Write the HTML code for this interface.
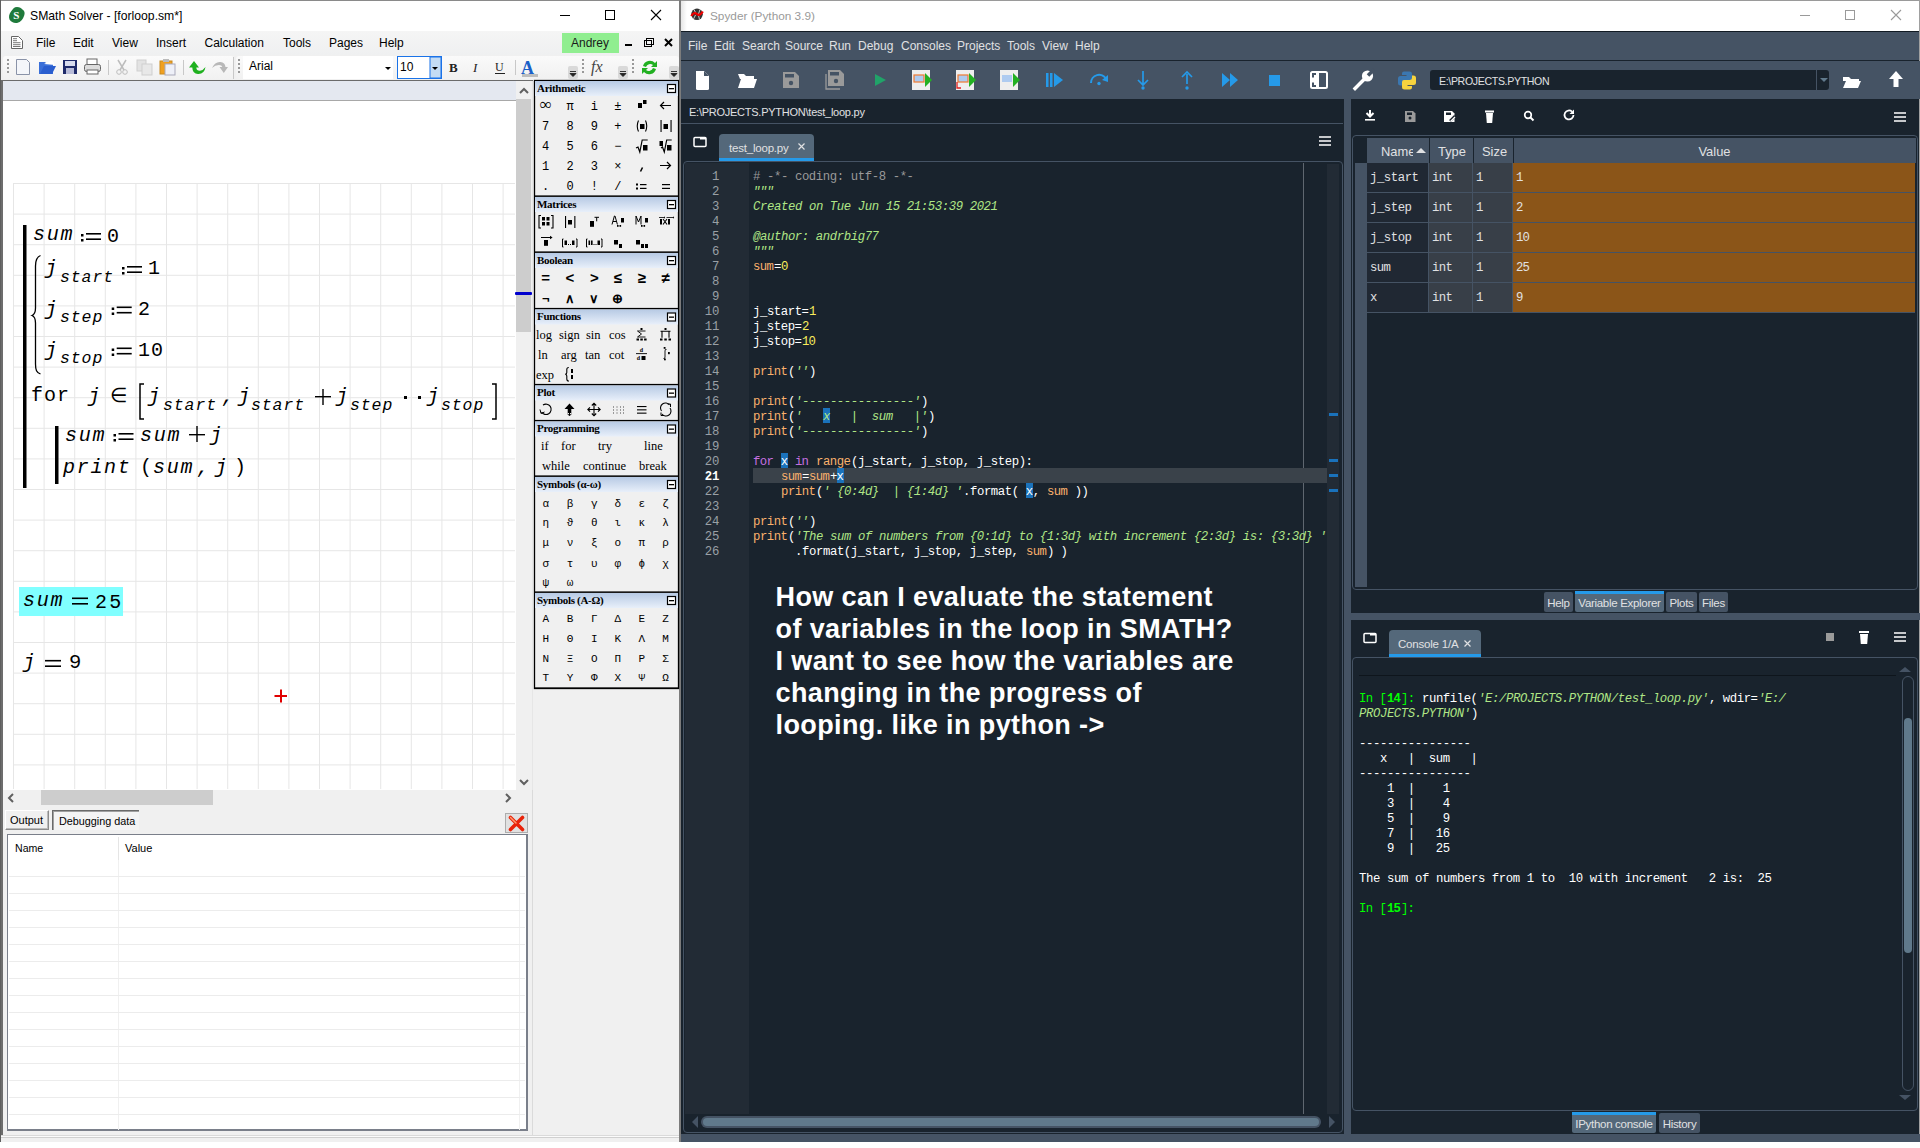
<!DOCTYPE html>
<html><head><meta charset="utf-8">
<style>
*{margin:0;padding:0;box-sizing:border-box}
html,body{width:1920px;height:1148px;overflow:hidden;background:#fff;font-family:"Liberation Sans",sans-serif}
.a{position:absolute}
svg text{white-space:pre}
</style></head><body>
<!-- ================= SMATH ================= -->
<div class="a" id="smath" style="left:0;top:0;width:681px;height:1142px;background:#f0f0f0;overflow:hidden">
  <div class="a" style="left:1px;top:1px;width:678px;height:30px;background:#fff"></div>
  <div class="a" style="left:1px;top:31px;width:678px;height:24px;background:linear-gradient(#f5f5f5,#eff0f1)"></div>
  <div class="a" style="left:3px;top:56px;width:231px;height:23px;background:linear-gradient(#fbfbfb,#f1f1f1);border-radius:3px"></div>
  <div class="a" style="left:236px;top:56px;width:443px;height:23px;background:linear-gradient(#fafafa,#f1f1f1);border-radius:3px"></div>
  <!-- font toolbar lighter segment -->
  <div class="a" style="left:243px;top:56px;width:150px;height:23px;background:#fff"></div>
  <!-- canvas frame -->
  <div class="a" style="left:1px;top:80px;width:532px;height:1px;background:#6b6b6b"></div>
  <div class="a" style="left:1px;top:80px;width:2px;height:1055px;background:#6d6d6d"></div>
  <div class="a" style="left:3px;top:81px;width:513px;height:19px;background:#e4e8f0"></div>
  <div class="a" style="left:3px;top:100px;width:513px;height:1px;background:#a8a8a8"></div>
  <div class="a" style="left:3px;top:101px;width:513px;height:689px;background:#fff"></div>
  <!-- vertical scrollbar -->
  <div class="a" style="left:516px;top:81px;width:17px;height:709px;background:#f0f0f0"></div>
  <div class="a" style="left:516px;top:99px;width:15px;height:233px;background:#cdcdcd"></div>
  <div class="a" style="left:515px;top:292px;width:17px;height:3px;background:#0000cd;border-radius:1px"></div>
  <!-- horizontal scrollbar -->
  <div class="a" style="left:3px;top:790px;width:530px;height:15px;background:#f0f0f0"></div>
  <div class="a" style="left:41px;top:790px;width:172px;height:15px;background:#cdcdcd"></div>
  <!-- palette area -->
  <div class="a" style="left:533px;top:81px;width:146px;height:1054px;background:#f0f0f0"></div>
  <div class="a" style="left:532px;top:688px;width:1px;height:447px;background:#dadada"></div><div class="a" style="left:532px;top:81px;width:1px;height:709px;background:#e6e6e6"></div>
<!-- bottom area: tabs + table -->
  <div class="a" style="left:5px;top:810px;width:44px;height:20px;background:#f0f0f0;border:1px solid #8c8c8c;border-top-color:#fff;border-left-color:#fff;box-shadow:inset -1px -1px 0 #bbb"></div>
  <div class="a" style="left:52px;top:810px;width:87px;height:20px;background:#f4f4f4;border:1px solid #6a6a6a;border-width:1px 0 0 1px;box-shadow:inset 1px 1px 0 #a0a0a0"></div>
  <div class="a" style="left:505px;top:813px;width:23px;height:20px;background:#e1e1e1;border:1px solid #adadad"></div>
  <div class="a" style="left:7px;top:834px;width:521px;height:297px;background:#fff;border:1px solid #7a7f8a;border-width:1px 2px 2px 1px"></div>
  <div class="a" style="left:1px;top:1135px;width:678px;height:1px;background:#dadada"></div>
  <div class="a" style="left:1px;top:1136px;width:678px;height:1px;background:#fbfbfb"></div>
  <div class="a" style="left:1px;top:1137px;width:678px;height:1px;background:#d0d0d0"></div>
  <!-- window border -->
  <div class="a" style="left:0;top:0;width:681px;height:1px;background:#8a8a8a"></div>
  <div class="a" style="left:0;top:0;width:1px;height:1142px;background:#5f5f5f"></div>
  <div class="a" style="left:679px;top:0;width:2px;height:1142px;background:#7c7c7c"></div>
</div>

<svg class="a" style="left:0;top:0" width="681" height="1142">
<!-- title icon -->
<path d="M17 7 C20 7 21 8 22.5 9.5 C25 11 25 14 24 16 C23 19 21 22 17 23 C14 23.5 11 22 9.5 19.5 C8.5 17 9 14 11 11.5 C13 9 14 7 17 7Z" fill="#1f7a3c"/>
<text x="13.2" y="19" font-family="Liberation Serif" font-weight="bold" font-size="11" fill="#fff">S</text>
<text x="30" y="19.8" font-family="Liberation Sans" font-size="12.2" fill="#000">SMath Solver - [forloop.sm*]</text>
<!-- window controls -->
<rect x="560" y="15" width="10" height="1" fill="#000"/>
<rect x="605.5" y="10.5" width="9" height="9" fill="none" stroke="#000" stroke-width="1"/>
<path d="M651 10 L661 20 M661 10 L651 20" stroke="#000" stroke-width="1.1"/>
<!-- menu -->
<g font-family="Liberation Sans" font-size="12" fill="#000">
<text x="36" y="46.6">File</text><text x="73" y="46.6">Edit</text><text x="112" y="46.6">View</text>
<text x="156" y="46.6">Insert</text><text x="204.5" y="46.6">Calculation</text><text x="283" y="46.6">Tools</text>
<text x="329" y="46.6">Pages</text><text x="379" y="46.6">Help</text>
</g>
<!-- doc icon in menu -->
<path d="M11.5 36.5h7l4 4v8h-11z" fill="#fff" stroke="#666"/><path d="M13 38.7h4M13 40.7h4M13 42.7h7.5M13 44.7h7.5M13 46.5h7.5" stroke="#555" stroke-width="0.8"/>
<!-- Andrey -->
<rect x="562" y="33" width="57" height="20" fill="#90ee90"/>
<text x="571" y="46.8" font-family="Liberation Sans" font-size="12" fill="#1a1a1a">Andrey</text>
<rect x="625" y="44" width="7" height="2" fill="#000"/>
<rect x="644.5" y="40.5" width="7" height="6" fill="none" stroke="#000"/><rect x="646.5" y="38.5" width="7" height="6" fill="none" stroke="#000"/>
<path d="M665 39 L672 46 M672 39 L665 46" stroke="#000" stroke-width="2"/>
<!-- toolbar grip -->
<g fill="#999"><rect x="7" y="59" width="2" height="2"/><rect x="7" y="63" width="2" height="2"/><rect x="7" y="67" width="2" height="2"/><rect x="7" y="71" width="2" height="2"/>
<rect x="238" y="59" width="2" height="2"/><rect x="238" y="63" width="2" height="2"/><rect x="238" y="67" width="2" height="2"/><rect x="238" y="71" width="2" height="2"/>
<rect x="582" y="59" width="2" height="2"/><rect x="582" y="63" width="2" height="2"/><rect x="582" y="67" width="2" height="2"/><rect x="582" y="71" width="2" height="2"/>
<rect x="632" y="59" width="2" height="2"/><rect x="632" y="63" width="2" height="2"/><rect x="632" y="67" width="2" height="2"/><rect x="632" y="71" width="2" height="2"/></g>
<!-- new -->
<path d="M16.5 59.5h10l3 3v12h-13z" fill="#f4f6fa" stroke="#8a93a8"/>
<!-- open -->
<path d="M39 62h6l2 2h6v10h-14z" fill="#3a6fd8"/><path d="M40 74l4-8h12l-4 8z" fill="#2a5ecf"/><path d="M44 64l8-4 3 5z" fill="#fff"/>
<!-- save -->
<rect x="63" y="60" width="14" height="14" fill="#1e2a6a"/><rect x="65" y="61" width="10" height="5" fill="#d8dcee"/><rect x="66" y="68" width="8" height="6" fill="#b8bcd8"/>
<!-- print -->
<rect x="87" y="59" width="10" height="6" fill="#fff" stroke="#666"/><rect x="84.5" y="64.5" width="16" height="7" rx="2" fill="#ddd" stroke="#666"/><rect x="87" y="70" width="11" height="4" fill="#fff" stroke="#666"/>
<rect x="108" y="60" width="1" height="15" fill="#c8c8c8"/>
<!-- cut copy paste (disabled) -->
<path d="M118 60l6 10M126 60l-6 10" stroke="#bdbdbd" stroke-width="1.5"/><circle cx="119" cy="72" r="2.3" fill="none" stroke="#bdbdbd"/><circle cx="125" cy="72" r="2.3" fill="none" stroke="#bdbdbd"/>
<rect x="137" y="60" width="9" height="11" fill="#e3e3e3" stroke="#cfcfcf"/><rect x="142" y="64" width="10" height="11" fill="#e8e8e8" stroke="#cfcfcf"/>
<rect x="160" y="61" width="12" height="13" fill="#f0a020" stroke="#c88a20"/><rect x="165" y="64" width="10" height="11" fill="#eef0f8" stroke="#aab"/><rect x="163" y="59" width="6" height="3" fill="#bbb"/>
<rect x="183" y="60" width="1" height="15" fill="#c8c8c8"/>
<!-- undo redo -->
<path d="M189 67.5 L194 61 L199 67.5 L196.3 67.5 Q196.5 71 200 70.8 Q203 70.5 205.5 67 Q204.5 73.8 198.5 74 Q192.5 74.3 192.3 67.5 Z" fill="#1fb01f"/>
<path d="M212 68 Q215 61.5 220.5 62 Q225 62.5 225.5 67 L228 67 L223.8 73 L219.5 67 L222.3 67 Q221.8 65 219 65 Q215 65 212 68 Z" fill="#b8b8b8"/>
<rect x="233" y="57" width="1" height="22" fill="#c8c8c8"/>
<!-- font combo -->
<text x="249" y="70" font-family="Liberation Sans" font-size="12" fill="#000">Arial</text>
<path d="M385 67h6l-3 3z" fill="#000"/>
<rect x="397.5" y="56.5" width="44" height="22" fill="#fff" stroke="#1a73e8"/>
<rect x="430" y="57" width="11" height="21" fill="#c4dcf4" stroke="#1a73e8"/>
<path d="M432 67h6l-3 3z" fill="#000"/>
<text x="400" y="71" font-family="Liberation Sans" font-size="12" fill="#000">10</text>
<text x="449" y="72" font-family="Liberation Serif" font-weight="bold" font-size="13" fill="#222">B</text>
<text x="473" y="72" font-family="Liberation Serif" font-style="italic" font-size="13" fill="#222">I</text>
<text x="495" y="71" font-family="Liberation Serif" font-size="12" fill="#222">U</text><rect x="495" y="73" width="10" height="1" fill="#222"/>
<rect x="515" y="60" width="1" height="15" fill="#c8c8c8"/>
<text x="521" y="74" font-family="Liberation Serif" font-weight="bold" font-size="18" fill="#1a5fc8">A</text>
<rect x="522" y="74" width="16" height="3" fill="#bdbdbd"/>
<!-- chevrons -->
<rect x="568" y="66" width="10" height="13" fill="#d9d9d9" rx="2"/><path d="M570 71.5h6M570 73.5h6l-3 3z" stroke="#222" fill="#222" stroke-width="0.9"/>
<rect x="618" y="66" width="10" height="13" fill="#d9d9d9" rx="2"/><path d="M620 71.5h6M620 73.5h6l-3 3z" stroke="#222" fill="#222" stroke-width="0.9"/>
<rect x="669" y="66" width="10" height="13" fill="#d9d9d9" rx="2"/><path d="M671 71.5h6M671 73.5h6l-3 3z" stroke="#222" fill="#222" stroke-width="0.9"/>
<text x="591" y="72" font-family="Liberation Serif" font-style="italic" font-size="16" fill="#444">fx</text>
<!-- refresh icon -->
<path d="M643 66 a7 7 0 0 1 12 -3 l2 -2 v6 h-6 l2 -2 a4.5 4.5 0 0 0 -7 2z" fill="#21b021"/>
<path d="M656 69 a7 7 0 0 1 -12 3 l-2 2 v-6 h6 l-2 2 a4.5 4.5 0 0 0 7 -2z" fill="#21b021"/>
<!-- grid --><rect x="13.00" y="183" width="1" height="606" fill="#e6e6e6"/><rect x="43.60" y="183" width="1" height="606" fill="#e6e6e6"/><rect x="74.20" y="183" width="1" height="606" fill="#e6e6e6"/><rect x="104.80" y="183" width="1" height="606" fill="#e6e6e6"/><rect x="135.40" y="183" width="1" height="606" fill="#e6e6e6"/><rect x="166.00" y="183" width="1" height="606" fill="#e6e6e6"/><rect x="196.60" y="183" width="1" height="606" fill="#e6e6e6"/><rect x="227.20" y="183" width="1" height="606" fill="#e6e6e6"/><rect x="257.80" y="183" width="1" height="606" fill="#e6e6e6"/><rect x="288.40" y="183" width="1" height="606" fill="#e6e6e6"/><rect x="319.00" y="183" width="1" height="606" fill="#e6e6e6"/><rect x="349.60" y="183" width="1" height="606" fill="#e6e6e6"/><rect x="380.20" y="183" width="1" height="606" fill="#e6e6e6"/><rect x="410.80" y="183" width="1" height="606" fill="#e6e6e6"/><rect x="441.40" y="183" width="1" height="606" fill="#e6e6e6"/><rect x="472.00" y="183" width="1" height="606" fill="#e6e6e6"/><rect x="502.60" y="183" width="1" height="606" fill="#e6e6e6"/><rect x="13" y="183.00" width="502" height="1" fill="#e6e6e6"/><rect x="13" y="213.60" width="502" height="1" fill="#e6e6e6"/><rect x="13" y="244.20" width="502" height="1" fill="#e6e6e6"/><rect x="13" y="274.80" width="502" height="1" fill="#e6e6e6"/><rect x="13" y="305.40" width="502" height="1" fill="#e6e6e6"/><rect x="13" y="336.00" width="502" height="1" fill="#e6e6e6"/><rect x="13" y="366.60" width="502" height="1" fill="#e6e6e6"/><rect x="13" y="397.20" width="502" height="1" fill="#e6e6e6"/><rect x="13" y="427.80" width="502" height="1" fill="#e6e6e6"/><rect x="13" y="458.40" width="502" height="1" fill="#e6e6e6"/><rect x="13" y="489.00" width="502" height="1" fill="#e6e6e6"/><rect x="13" y="519.60" width="502" height="1" fill="#e6e6e6"/><rect x="13" y="550.20" width="502" height="1" fill="#e6e6e6"/><rect x="13" y="580.80" width="502" height="1" fill="#e6e6e6"/><rect x="13" y="611.40" width="502" height="1" fill="#e6e6e6"/><rect x="13" y="642.00" width="502" height="1" fill="#e6e6e6"/><rect x="13" y="672.60" width="502" height="1" fill="#e6e6e6"/><rect x="13" y="703.20" width="502" height="1" fill="#e6e6e6"/><rect x="13" y="733.80" width="502" height="1" fill="#e6e6e6"/><rect x="13" y="764.40" width="502" height="1" fill="#e6e6e6"/>

<!-- scroll arrows -->
<path d="M520 93l4 -4 4 4" stroke="#606060" stroke-width="2" fill="none"/>
<path d="M520 780l4 4 4 -4" stroke="#606060" stroke-width="2" fill="none"/>
<path d="M13 794l-4 4 4 4" stroke="#606060" stroke-width="2" fill="none"/>
<path d="M506 794l4 4 -4 4" stroke="#606060" stroke-width="2" fill="none"/>
</svg>
<svg class="a" style="left:0;top:0" width="681" height="1142">
<rect x="23" y="225" width="3.5" height="263" fill="#000"/>
<rect x="55" y="426" width="3.5" height="58" fill="#000"/>
<text x="33" y="240" font-family="Liberation Mono" font-style="italic" font-size="20" letter-spacing="1.7" fill="#000" xml:space="preserve">sum</text>
<rect x="81" y="234" width="2.5" height="2.5" fill="#000"/><rect x="81" y="239" width="2.5" height="2.5" fill="#000"/><rect x="86" y="233" width="15" height="1.6" fill="#000"/><rect x="86" y="238.4" width="15" height="1.6" fill="#000"/>
<text x="107" y="242" font-family="Liberation Mono" font-size="20" letter-spacing="1.0" fill="#000" xml:space="preserve">0</text>
<path d="M40.5 255.5 C36.5 257 35.5 260 35.5 266 L35.5 308 C35.5 312 34.5 314.5 32 315.5 C34.5 316.5 35.5 319 35.5 323 L35.5 364 C35.5 370 36.5 372.5 40.5 374" fill="none" stroke="#000" stroke-width="1.3"/>
<text x="45" y="274" font-family="Liberation Mono" font-style="italic" font-size="20" letter-spacing="1.7" fill="#000" xml:space="preserve">j</text>
<text x="60" y="281.5" font-family="Liberation Mono" font-style="italic" font-size="16.5" letter-spacing="0.9" fill="#000" xml:space="preserve">start</text>
<rect x="122" y="267" width="2.5" height="2.5" fill="#000"/><rect x="122" y="272" width="2.5" height="2.5" fill="#000"/><rect x="127" y="266" width="15" height="1.6" fill="#000"/><rect x="127" y="271.4" width="15" height="1.6" fill="#000"/>
<text x="148" y="274" font-family="Liberation Mono" font-size="20" letter-spacing="1.0" fill="#000" xml:space="preserve">1</text>
<text x="45" y="314.5" font-family="Liberation Mono" font-style="italic" font-size="20" letter-spacing="1.7" fill="#000" xml:space="preserve">j</text>
<text x="60" y="322.0" font-family="Liberation Mono" font-style="italic" font-size="16.5" letter-spacing="0.9" fill="#000" xml:space="preserve">step</text>
<rect x="111.7" y="307.5" width="2.5" height="2.5" fill="#000"/><rect x="111.7" y="312.5" width="2.5" height="2.5" fill="#000"/><rect x="116.7" y="306.5" width="15" height="1.6" fill="#000"/><rect x="116.7" y="311.9" width="15" height="1.6" fill="#000"/>
<text x="138" y="314.5" font-family="Liberation Mono" font-size="20" letter-spacing="1.0" fill="#000" xml:space="preserve">2</text>
<text x="45" y="355.5" font-family="Liberation Mono" font-style="italic" font-size="20" letter-spacing="1.7" fill="#000" xml:space="preserve">j</text>
<text x="60" y="363.0" font-family="Liberation Mono" font-style="italic" font-size="16.5" letter-spacing="0.9" fill="#000" xml:space="preserve">stop</text>
<rect x="111.7" y="348.5" width="2.5" height="2.5" fill="#000"/><rect x="111.7" y="353.5" width="2.5" height="2.5" fill="#000"/><rect x="116.7" y="347.5" width="15" height="1.6" fill="#000"/><rect x="116.7" y="352.9" width="15" height="1.6" fill="#000"/>
<text x="138" y="355.5" font-family="Liberation Mono" font-size="20" letter-spacing="1.0" fill="#000" xml:space="preserve">10</text>
<text x="31" y="401" font-family="Liberation Mono" font-size="20" letter-spacing="1.0" fill="#000" xml:space="preserve">for</text>
<text x="88" y="402" font-family="Liberation Mono" font-style="italic" font-size="20" letter-spacing="1.7" fill="#000" xml:space="preserve">j</text>
<text x="110" y="402" font-family="Liberation Serif" font-size="20" fill="#000">∈</text>
<path d="M144 384 L140 384 L140 419 L144 419" fill="none" stroke="#000" stroke-width="1.5"/>
<text x="148" y="402" font-family="Liberation Mono" font-style="italic" font-size="20" letter-spacing="1.7" fill="#000" xml:space="preserve">j</text>
<text x="163" y="410" font-family="Liberation Mono" font-style="italic" font-size="16.5" letter-spacing="0.9" fill="#000" xml:space="preserve">start</text>
<text x="222" y="402" font-family="Liberation Mono" font-style="italic" font-size="20" letter-spacing="1.7" fill="#000" xml:space="preserve">,</text>
<text x="238" y="402" font-family="Liberation Mono" font-style="italic" font-size="20" letter-spacing="1.7" fill="#000" xml:space="preserve">j</text>
<text x="251" y="410" font-family="Liberation Mono" font-style="italic" font-size="16.5" letter-spacing="0.9" fill="#000" xml:space="preserve">start</text>
<rect x="315" y="396" width="16" height="1.4" fill="#000"/><rect x="322.3" y="389" width="1.4" height="16" fill="#000"/>
<text x="336" y="402" font-family="Liberation Mono" font-style="italic" font-size="20" letter-spacing="1.7" fill="#000" xml:space="preserve">j</text>
<text x="350" y="410" font-family="Liberation Mono" font-style="italic" font-size="16.5" letter-spacing="0.9" fill="#000" xml:space="preserve">step</text>
<rect x="404" y="396" width="3" height="3" fill="#000"/><rect x="418" y="396" width="3" height="3" fill="#000"/>
<text x="427" y="402" font-family="Liberation Mono" font-style="italic" font-size="20" letter-spacing="1.7" fill="#000" xml:space="preserve">j</text>
<text x="441" y="410" font-family="Liberation Mono" font-style="italic" font-size="16.5" letter-spacing="0.9" fill="#000" xml:space="preserve">stop</text>
<path d="M492 384 L496 384 L496 419 L492 419" fill="none" stroke="#000" stroke-width="1.5"/>
<text x="65" y="440.7" font-family="Liberation Mono" font-style="italic" font-size="20" letter-spacing="1.7" fill="#000" xml:space="preserve">sum</text>
<rect x="113.5" y="434" width="2.5" height="2.5" fill="#000"/><rect x="113.5" y="439" width="2.5" height="2.5" fill="#000"/><rect x="118.5" y="433" width="15" height="1.6" fill="#000"/><rect x="118.5" y="438.4" width="15" height="1.6" fill="#000"/>
<text x="140" y="440.7" font-family="Liberation Mono" font-style="italic" font-size="20" letter-spacing="1.7" fill="#000" xml:space="preserve">sum</text>
<rect x="189" y="434" width="16" height="1.4" fill="#000"/><rect x="196.3" y="426" width="1.4" height="16" fill="#000"/>
<text x="210" y="440.7" font-family="Liberation Mono" font-style="italic" font-size="20" letter-spacing="1.7" fill="#000" xml:space="preserve">j</text>
<text x="63" y="472.6" font-family="Liberation Mono" font-style="italic" font-size="20" letter-spacing="1.7" fill="#000" xml:space="preserve">print</text>
<text x="140" y="472.6" font-family="Liberation Mono" font-size="20" letter-spacing="1.0" fill="#000" xml:space="preserve">(</text>
<text x="153" y="472.6" font-family="Liberation Mono" font-style="italic" font-size="20" letter-spacing="1.7" fill="#000" xml:space="preserve">sum</text>
<text x="197" y="472.6" font-family="Liberation Mono" font-style="italic" font-size="20" letter-spacing="1.7" fill="#000" xml:space="preserve">,</text>
<text x="215" y="472.6" font-family="Liberation Mono" font-style="italic" font-size="20" letter-spacing="1.7" fill="#000" xml:space="preserve">j</text>
<text x="234" y="472.6" font-family="Liberation Mono" font-size="20" letter-spacing="1.0" fill="#000" xml:space="preserve">)</text>
<rect x="19" y="587" width="104" height="29" fill="#80ffff"/>
<text x="23" y="606" font-family="Liberation Mono" font-style="italic" font-size="20" letter-spacing="1.7" fill="#000" xml:space="preserve">sum</text>
<rect x="72" y="597.5" width="16" height="1.6" fill="#000"/><rect x="72" y="603" width="16" height="1.6" fill="#000"/>
<text x="95" y="607.5" font-family="Liberation Mono" font-size="20" letter-spacing="2.2" fill="#000" xml:space="preserve">25</text>
<text x="23" y="668.4" font-family="Liberation Mono" font-style="italic" font-size="20" letter-spacing="1.7" fill="#000" xml:space="preserve">j</text>
<rect x="45" y="659.9" width="16" height="1.6" fill="#000"/><rect x="45" y="665.4" width="16" height="1.6" fill="#000"/>
<text x="69" y="668.4" font-family="Liberation Mono" font-size="20.5" letter-spacing="1.0" fill="#000" xml:space="preserve">9</text>
<rect x="274.5" y="695" width="12.5" height="2" fill="#e00000"/><rect x="280" y="689.5" width="2" height="13" fill="#e00000"/>
</svg>
<svg class="a" style="left:0;top:0" width="681" height="1142">
<defs><linearGradient id="hg" x1="0" y1="0" x2="0" y2="1"><stop offset="0" stop-color="#b7cae4"/><stop offset="1" stop-color="#e8effa"/></linearGradient></defs>
<rect x="534.5" y="80.5" width="144" height="608" fill="#f0f0f0" stroke="#000" stroke-width="1.3"/>
<rect x="535" y="81" width="143" height="15" fill="url(#hg)"/>
<rect x="534" y="195.4" width="145" height="1.5" fill="#000"/>
<text x="537" y="91.7" font-family="Liberation Serif" font-weight="bold" font-size="11" letter-spacing="-0.3" fill="#000">Arithmetic</text>
<rect x="667.5" y="84.5" width="8" height="8" fill="#fff" stroke="#000" stroke-width="1.2"/><rect x="669" y="88" width="5" height="1.3" fill="#000"/>
<rect x="535" y="197" width="143" height="15" fill="url(#hg)"/>
<rect x="534" y="251.4" width="145" height="1.5" fill="#000"/>
<text x="537" y="207.7" font-family="Liberation Serif" font-weight="bold" font-size="11" letter-spacing="-0.3" fill="#000">Matrices</text>
<rect x="667.5" y="200.5" width="8" height="8" fill="#fff" stroke="#000" stroke-width="1.2"/><rect x="669" y="204" width="5" height="1.3" fill="#000"/>
<rect x="535" y="253" width="143" height="15" fill="url(#hg)"/>
<rect x="534" y="307.9" width="145" height="1.5" fill="#000"/>
<text x="537" y="263.7" font-family="Liberation Serif" font-weight="bold" font-size="11" letter-spacing="-0.3" fill="#000">Boolean</text>
<rect x="667.5" y="256.5" width="8" height="8" fill="#fff" stroke="#000" stroke-width="1.2"/><rect x="669" y="260" width="5" height="1.3" fill="#000"/>
<rect x="535" y="309.5" width="143" height="15" fill="url(#hg)"/>
<rect x="534" y="383.9" width="145" height="1.5" fill="#000"/>
<text x="537" y="320.2" font-family="Liberation Serif" font-weight="bold" font-size="11" letter-spacing="-0.3" fill="#000">Functions</text>
<rect x="667.5" y="313.0" width="8" height="8" fill="#fff" stroke="#000" stroke-width="1.2"/><rect x="669" y="316.5" width="5" height="1.3" fill="#000"/>
<rect x="535" y="385.5" width="143" height="15" fill="url(#hg)"/>
<rect x="534" y="419.9" width="145" height="1.5" fill="#000"/>
<text x="537" y="396.2" font-family="Liberation Serif" font-weight="bold" font-size="11" letter-spacing="-0.3" fill="#000">Plot</text>
<rect x="667.5" y="389.0" width="8" height="8" fill="#fff" stroke="#000" stroke-width="1.2"/><rect x="669" y="392.5" width="5" height="1.3" fill="#000"/>
<rect x="535" y="421.5" width="143" height="15" fill="url(#hg)"/>
<rect x="534" y="475.4" width="145" height="1.5" fill="#000"/>
<text x="537" y="432.2" font-family="Liberation Serif" font-weight="bold" font-size="11" letter-spacing="-0.3" fill="#000">Programming</text>
<rect x="667.5" y="425.0" width="8" height="8" fill="#fff" stroke="#000" stroke-width="1.2"/><rect x="669" y="428.5" width="5" height="1.3" fill="#000"/>
<rect x="535" y="477" width="143" height="15" fill="url(#hg)"/>
<rect x="534" y="591.4" width="145" height="1.5" fill="#000"/>
<text x="537" y="487.7" font-family="Liberation Serif" font-weight="bold" font-size="11" letter-spacing="-0.3" fill="#000">Symbols (α-ω)</text>
<rect x="667.5" y="480.5" width="8" height="8" fill="#fff" stroke="#000" stroke-width="1.2"/><rect x="669" y="484" width="5" height="1.3" fill="#000"/>
<rect x="535" y="593" width="143" height="15" fill="url(#hg)"/>
<rect x="534" y="687.4" width="145" height="1.5" fill="#000"/>
<text x="537" y="603.7" font-family="Liberation Serif" font-weight="bold" font-size="11" letter-spacing="-0.3" fill="#000">Symbols (A-Ω)</text>
<rect x="667.5" y="596.5" width="8" height="8" fill="#fff" stroke="#000" stroke-width="1.2"/><rect x="669" y="600" width="5" height="1.3" fill="#000"/>
<text x="570" y="110.2" font-family="Liberation Mono" font-size="12" font-weight="normal" text-anchor="middle" fill="#000">π</text><text x="594.3" y="110.2" font-family="Liberation Mono" font-size="12" font-weight="normal" text-anchor="middle" fill="#000">i</text><text x="617.8" y="110.2" font-family="Liberation Mono" font-size="12" font-weight="normal" text-anchor="middle" fill="#000">±</text>
<rect x="638" y="103" width="4" height="5" fill="#000"/><rect x="643" y="100" width="3.5" height="4" fill="#000"/>
<text x="545.7" y="130.2" font-family="Liberation Mono" font-size="12" font-weight="normal" text-anchor="middle" fill="#000">7</text><text x="570" y="130.2" font-family="Liberation Mono" font-size="12" font-weight="normal" text-anchor="middle" fill="#000">8</text><text x="594.3" y="130.2" font-family="Liberation Mono" font-size="12" font-weight="normal" text-anchor="middle" fill="#000">9</text><text x="617.8" y="130.2" font-family="Liberation Mono" font-size="12" font-weight="normal" text-anchor="middle" fill="#000">+</text>
<text x="545.7" y="150.2" font-family="Liberation Mono" font-size="12" font-weight="normal" text-anchor="middle" fill="#000">4</text><text x="570" y="150.2" font-family="Liberation Mono" font-size="12" font-weight="normal" text-anchor="middle" fill="#000">5</text><text x="594.3" y="150.2" font-family="Liberation Mono" font-size="12" font-weight="normal" text-anchor="middle" fill="#000">6</text><text x="617.8" y="150.2" font-family="Liberation Mono" font-size="12" font-weight="normal" text-anchor="middle" fill="#000">−</text>
<text x="545.7" y="170.1" font-family="Liberation Mono" font-size="12" font-weight="normal" text-anchor="middle" fill="#000">1</text><text x="570" y="170.1" font-family="Liberation Mono" font-size="12" font-weight="normal" text-anchor="middle" fill="#000">2</text><text x="594.3" y="170.1" font-family="Liberation Mono" font-size="12" font-weight="normal" text-anchor="middle" fill="#000">3</text><text x="617.8" y="170.1" font-family="Liberation Mono" font-size="12" font-weight="normal" text-anchor="middle" fill="#000">×</text>
<text x="545.7" y="190.1" font-family="Liberation Mono" font-size="12" font-weight="normal" text-anchor="middle" fill="#000">.</text><text x="570" y="190.1" font-family="Liberation Mono" font-size="12" font-weight="normal" text-anchor="middle" fill="#000">0</text><text x="594.3" y="190.1" font-family="Liberation Mono" font-size="12" font-weight="normal" text-anchor="middle" fill="#000">!</text><text x="617.8" y="190.1" font-family="Liberation Mono" font-size="12" font-weight="normal" text-anchor="middle" fill="#000">/</text>


<text x="545.7" y="283" font-family="Liberation Sans" font-size="15" font-weight="bold" text-anchor="middle" fill="#000">=</text><text x="570" y="283" font-family="Liberation Sans" font-size="15" font-weight="bold" text-anchor="middle" fill="#000"><</text><text x="594.3" y="283" font-family="Liberation Sans" font-size="15" font-weight="bold" text-anchor="middle" fill="#000">></text><text x="617.8" y="283" font-family="Liberation Sans" font-size="15" font-weight="bold" text-anchor="middle" fill="#000">≤</text><text x="641.8" y="283" font-family="Liberation Sans" font-size="15" font-weight="bold" text-anchor="middle" fill="#000">≥</text><text x="665.5" y="283" font-family="Liberation Sans" font-size="15" font-weight="bold" text-anchor="middle" fill="#000">≠</text>
<text x="545.7" y="302.8" font-family="Liberation Sans" font-size="13" font-weight="bold" text-anchor="middle" fill="#000">¬</text><text x="570" y="302.8" font-family="Liberation Sans" font-size="13" font-weight="bold" text-anchor="middle" fill="#000">∧</text><text x="594.3" y="302.8" font-family="Liberation Sans" font-size="13" font-weight="bold" text-anchor="middle" fill="#000">∨</text><text x="617.8" y="302.8" font-family="Liberation Sans" font-size="13" font-weight="bold" text-anchor="middle" fill="#000">⊕</text>
<text x="536" y="338.9" font-family="Liberation Serif" font-size="12.5" fill="#000">log</text><text x="559" y="338.9" font-family="Liberation Serif" font-size="12.5" fill="#000">sign</text><text x="586" y="338.9" font-family="Liberation Serif" font-size="12.5" fill="#000">sin</text><text x="609" y="338.9" font-family="Liberation Serif" font-size="12.5" fill="#000">cos</text>
<text x="538" y="358.5" font-family="Liberation Serif" font-size="12.5" fill="#000">ln</text><text x="561" y="358.5" font-family="Liberation Serif" font-size="12.5" fill="#000">arg</text><text x="585" y="358.5" font-family="Liberation Serif" font-size="12.5" fill="#000">tan</text><text x="609" y="358.5" font-family="Liberation Serif" font-size="12.5" fill="#000">cot</text>
<text x="536" y="378.7" font-family="Liberation Serif" font-size="12.5" fill="#000">exp</text>







<text x="541" y="450.3" font-family="Liberation Serif" font-size="12.5" fill="#000">if</text><text x="561" y="450.3" font-family="Liberation Serif" font-size="12.5" fill="#000">for</text><text x="598" y="450.3" font-family="Liberation Serif" font-size="12.5" fill="#000">try</text><text x="644" y="450.3" font-family="Liberation Serif" font-size="12.5" fill="#000">line</text>
<text x="542" y="469.9" font-family="Liberation Serif" font-size="12.5" fill="#000">while</text><text x="583" y="469.9" font-family="Liberation Serif" font-size="12.5" fill="#000">continue</text><text x="639" y="469.9" font-family="Liberation Serif" font-size="12.5" fill="#000">break</text>
<text x="545.7" y="507" font-family="Liberation Mono" font-size="11" font-weight="normal" text-anchor="middle" fill="#000">α</text>
<text x="570" y="507" font-family="Liberation Mono" font-size="11" font-weight="normal" text-anchor="middle" fill="#000">β</text>
<text x="594.3" y="507" font-family="Liberation Mono" font-size="11" font-weight="normal" text-anchor="middle" fill="#000">γ</text>
<text x="617.8" y="507" font-family="Liberation Mono" font-size="11" font-weight="normal" text-anchor="middle" fill="#000">δ</text>
<text x="641.8" y="507" font-family="Liberation Mono" font-size="11" font-weight="normal" text-anchor="middle" fill="#000">ε</text>
<text x="665.5" y="507" font-family="Liberation Mono" font-size="11" font-weight="normal" text-anchor="middle" fill="#000">ζ</text>
<text x="545.7" y="526.4" font-family="Liberation Mono" font-size="11" font-weight="normal" text-anchor="middle" fill="#000">η</text>
<text x="570" y="526.4" font-family="Liberation Mono" font-size="11" font-weight="normal" text-anchor="middle" fill="#000">ϑ</text>
<text x="594.3" y="526.4" font-family="Liberation Mono" font-size="11" font-weight="normal" text-anchor="middle" fill="#000">θ</text>
<text x="617.8" y="526.4" font-family="Liberation Mono" font-size="11" font-weight="normal" text-anchor="middle" fill="#000">ι</text>
<text x="641.8" y="526.4" font-family="Liberation Mono" font-size="11" font-weight="normal" text-anchor="middle" fill="#000">κ</text>
<text x="665.5" y="526.4" font-family="Liberation Mono" font-size="11" font-weight="normal" text-anchor="middle" fill="#000">λ</text>
<text x="545.7" y="546.4" font-family="Liberation Mono" font-size="11" font-weight="normal" text-anchor="middle" fill="#000">μ</text>
<text x="570" y="546.4" font-family="Liberation Mono" font-size="11" font-weight="normal" text-anchor="middle" fill="#000">ν</text>
<text x="594.3" y="546.4" font-family="Liberation Mono" font-size="11" font-weight="normal" text-anchor="middle" fill="#000">ξ</text>
<text x="617.8" y="546.4" font-family="Liberation Mono" font-size="11" font-weight="normal" text-anchor="middle" fill="#000">ο</text>
<text x="641.8" y="546.4" font-family="Liberation Mono" font-size="11" font-weight="normal" text-anchor="middle" fill="#000">π</text>
<text x="665.5" y="546.4" font-family="Liberation Mono" font-size="11" font-weight="normal" text-anchor="middle" fill="#000">ρ</text>
<text x="545.7" y="566.7" font-family="Liberation Mono" font-size="11" font-weight="normal" text-anchor="middle" fill="#000">σ</text>
<text x="570" y="566.7" font-family="Liberation Mono" font-size="11" font-weight="normal" text-anchor="middle" fill="#000">τ</text>
<text x="594.3" y="566.7" font-family="Liberation Mono" font-size="11" font-weight="normal" text-anchor="middle" fill="#000">υ</text>
<text x="617.8" y="566.7" font-family="Liberation Mono" font-size="11" font-weight="normal" text-anchor="middle" fill="#000">φ</text>
<text x="641.8" y="566.7" font-family="Liberation Mono" font-size="11" font-weight="normal" text-anchor="middle" fill="#000">ϕ</text>
<text x="665.5" y="566.7" font-family="Liberation Mono" font-size="11" font-weight="normal" text-anchor="middle" fill="#000">χ</text>
<text x="545.7" y="586.2" font-family="Liberation Mono" font-size="11" font-weight="normal" text-anchor="middle" fill="#000">ψ</text>
<text x="570" y="586.2" font-family="Liberation Mono" font-size="11" font-weight="normal" text-anchor="middle" fill="#000">ω</text>
<text x="545.7" y="622" font-family="Liberation Mono" font-size="11" font-weight="normal" text-anchor="middle" fill="#000">Α</text>
<text x="570" y="622" font-family="Liberation Mono" font-size="11" font-weight="normal" text-anchor="middle" fill="#000">Β</text>
<text x="594.3" y="622" font-family="Liberation Mono" font-size="11" font-weight="normal" text-anchor="middle" fill="#000">Γ</text>
<text x="617.8" y="622" font-family="Liberation Mono" font-size="11" font-weight="normal" text-anchor="middle" fill="#000">Δ</text>
<text x="641.8" y="622" font-family="Liberation Mono" font-size="11" font-weight="normal" text-anchor="middle" fill="#000">Ε</text>
<text x="665.5" y="622" font-family="Liberation Mono" font-size="11" font-weight="normal" text-anchor="middle" fill="#000">Ζ</text>
<text x="545.7" y="641.8" font-family="Liberation Mono" font-size="11" font-weight="normal" text-anchor="middle" fill="#000">Η</text>
<text x="570" y="641.8" font-family="Liberation Mono" font-size="11" font-weight="normal" text-anchor="middle" fill="#000">Θ</text>
<text x="594.3" y="641.8" font-family="Liberation Mono" font-size="11" font-weight="normal" text-anchor="middle" fill="#000">Ι</text>
<text x="617.8" y="641.8" font-family="Liberation Mono" font-size="11" font-weight="normal" text-anchor="middle" fill="#000">Κ</text>
<text x="641.8" y="641.8" font-family="Liberation Mono" font-size="11" font-weight="normal" text-anchor="middle" fill="#000">Λ</text>
<text x="665.5" y="641.8" font-family="Liberation Mono" font-size="11" font-weight="normal" text-anchor="middle" fill="#000">Μ</text>
<text x="545.7" y="661.8" font-family="Liberation Mono" font-size="11" font-weight="normal" text-anchor="middle" fill="#000">Ν</text>
<text x="570" y="661.8" font-family="Liberation Mono" font-size="11" font-weight="normal" text-anchor="middle" fill="#000">Ξ</text>
<text x="594.3" y="661.8" font-family="Liberation Mono" font-size="11" font-weight="normal" text-anchor="middle" fill="#000">Ο</text>
<text x="617.8" y="661.8" font-family="Liberation Mono" font-size="11" font-weight="normal" text-anchor="middle" fill="#000">Π</text>
<text x="641.8" y="661.8" font-family="Liberation Mono" font-size="11" font-weight="normal" text-anchor="middle" fill="#000">Ρ</text>
<text x="665.5" y="661.8" font-family="Liberation Mono" font-size="11" font-weight="normal" text-anchor="middle" fill="#000">Σ</text>
<text x="545.7" y="681.3" font-family="Liberation Mono" font-size="11" font-weight="normal" text-anchor="middle" fill="#000">Τ</text>
<text x="570" y="681.3" font-family="Liberation Mono" font-size="11" font-weight="normal" text-anchor="middle" fill="#000">Υ</text>
<text x="594.3" y="681.3" font-family="Liberation Mono" font-size="11" font-weight="normal" text-anchor="middle" fill="#000">Φ</text>
<text x="617.8" y="681.3" font-family="Liberation Mono" font-size="11" font-weight="normal" text-anchor="middle" fill="#000">Χ</text>
<text x="641.8" y="681.3" font-family="Liberation Mono" font-size="11" font-weight="normal" text-anchor="middle" fill="#000">Ψ</text>
<text x="665.5" y="681.3" font-family="Liberation Mono" font-size="11" font-weight="normal" text-anchor="middle" fill="#000">Ω</text>
<path d="M660.5 105.5h10.5M664 102l-3.5 3.5 3.5 3.5" stroke="#000" stroke-width="1.2" fill="none"/><path d="M638.5 120.5q-2.5 5.5 0 11M645.5 120.5q2.5 5.5 0 11" stroke="#000" stroke-width="1.1" fill="none"/><rect x="640" y="124" width="4.5" height="5" fill="#000"/><rect x="660.5" y="120" width="1.1" height="12" fill="#000"/><rect x="670.5" y="120" width="1.1" height="12" fill="#000"/><rect x="663.5" y="124" width="4.5" height="5" fill="#000"/><path d="M636 148l2 -1 1.8 5 2.4 -12h5.5" stroke="#000" stroke-width="1.2" fill="none"/><rect x="643" y="145" width="4.5" height="5.5" fill="#000"/><rect x="659.5" y="141" width="3.5" height="5" fill="#000"/><path d="M661 148l1.5 -1 1.8 5 2.4 -12h5" stroke="#000" stroke-width="1.2" fill="none"/><rect x="667" y="145" width="4.5" height="5.5" fill="#000"/><path d="M642.5 167.5l-2 4" stroke="#000" stroke-width="1.6"/><path d="M660 165.5h10.5M667 162l3.5 3.5-3.5 3.5" stroke="#000" stroke-width="1.2" fill="none"/><rect x="636" y="183.5" width="2" height="2" fill="#000"/><rect x="636" y="187.5" width="2" height="2" fill="#000"/><rect x="640" y="184" width="6.5" height="1.2" fill="#000"/><rect x="640" y="187.8" width="6.5" height="1.2" fill="#000"/><rect x="662" y="184" width="8" height="1.2" fill="#000"/><rect x="662" y="187.8" width="8" height="1.2" fill="#000"/><text x="545.7" y="110" font-family="Liberation Serif" font-size="17" text-anchor="middle" fill="#000">∞</text><path d="M541 215.5h-2v12.5h2M551 215.5h2v12.5h-2" stroke="#000" stroke-width="1.1" fill="none"/><rect x="542" y="217" width="3" height="3.5" fill="#000"/><rect x="546.5" y="217" width="3" height="3.5" fill="#000"/><rect x="542" y="222" width="3" height="3.5" fill="#000"/><rect x="546.5" y="222" width="3" height="3.5" fill="#000"/><rect x="565" y="216" width="1.1" height="12" fill="#000"/><rect x="574.3" y="216" width="1.1" height="12" fill="#000"/><rect x="568" y="220" width="4" height="4.5" fill="#000"/><rect x="590" y="221" width="4" height="5.8" fill="#000"/><path d="M594.5 217.3h4.5M596.7 217.3v4" stroke="#000" stroke-width="1"/><path d="M612 224.5l2.4-8.5h0.6l2.4 8.5M613 221.5h3.5" stroke="#000" stroke-width="1" fill="none"/><rect x="617" y="225" width="1.6" height="1.8" fill="#000"/><rect x="619.5" y="225" width="1.6" height="1.8" fill="#000"/><rect x="621" y="218" width="3" height="4.5" fill="#000"/><path d="M636 224.5v-8.5l2.5 6 2.5-6v8.5" stroke="#000" stroke-width="1" fill="none"/><rect x="641" y="225" width="1.6" height="1.8" fill="#000"/><rect x="643.5" y="225" width="1.6" height="1.8" fill="#000"/><rect x="645" y="218" width="3" height="4.5" fill="#000"/><rect x="660" y="219" width="2" height="5.5" fill="#000"/><path d="M663 219l4 5.5M667 219l-4 5.5" stroke="#000" stroke-width="1.1"/><rect x="668" y="219" width="2" height="5.5" fill="#000"/><path d="M659 217.5h5M666.5 217.5h6.5" stroke="#000" stroke-width="0.8"/><path d="M664 216.3l1.2 1.2-1.2 1.2zM673 216.3l1.2 1.2-1.2 1.2z" fill="#000"/><path d="M541 237.5h10" stroke="#000" stroke-width="1"/><path d="M550 235.8l2.6 1.7-2.6 1.7z" fill="#000"/><rect x="544" y="240" width="4" height="5.8" fill="#000"/><path d="M563.5 239h-1v8h1M576 239h1v8h-1" stroke="#000" stroke-width="1" fill="none"/><rect x="564.5" y="240.5" width="2.5" height="4.5" fill="#000"/><rect x="568" y="244" width="1" height="1" fill="#000"/><rect x="570" y="244" width="1" height="1" fill="#000"/><rect x="572" y="240.5" width="2.5" height="4.5" fill="#000"/><path d="M587.5 239h-1v8h1M601 239h1v8h-1" stroke="#000" stroke-width="1" fill="none"/><rect x="588.5" y="240.5" width="1.6" height="4.5" fill="#000"/><rect x="591" y="240.5" width="1.6" height="4.5" fill="#000"/><rect x="593.5" y="244" width="1" height="1" fill="#000"/><rect x="595.5" y="244" width="1" height="1" fill="#000"/><rect x="597.5" y="240.5" width="2.5" height="4.5" fill="#000"/><rect x="614" y="240" width="4" height="4.5" fill="#000"/><rect x="619" y="244" width="3" height="4" fill="#000"/><rect x="636" y="240" width="4" height="4.5" fill="#000"/><rect x="641" y="244" width="3" height="4" fill="#000"/><rect x="645" y="244" width="3" height="4" fill="#000"/><rect x="640.5" y="328" width="2" height="2" fill="#000"/><path d="M645.5 331h-8l4 3-4 3h8" stroke="#000" stroke-width="0.9" fill="none"/><rect x="636.5" y="338.5" width="2.5" height="2" fill="#000"/><rect x="640.3" y="338.5" width="2.5" height="2" fill="#000"/><rect x="644.1" y="338.5" width="2.5" height="2" fill="#000"/><rect x="664.5" y="328" width="2" height="2" fill="#000"/><path d="M660.5 331.3h10M662 331.3v6.5M669 331.3v6.5" stroke="#000" stroke-width="1.1" fill="none"/><rect x="660" y="338.5" width="2.5" height="2" fill="#000"/><rect x="664.3" y="338.5" width="2.5" height="2" fill="#000"/><rect x="668.5" y="338.5" width="2.5" height="2" fill="#000"/><text x="641.5" y="351.5" font-family="Liberation Serif" font-weight="bold" font-size="6" text-anchor="middle" fill="#000">d</text><rect x="636" y="353.2" width="11" height="0.9" fill="#000"/><text x="638.5" y="360" font-family="Liberation Serif" font-weight="bold" font-size="6" text-anchor="middle" fill="#000">d</text><rect x="641.5" y="356" width="4" height="4" fill="#000"/><rect x="663.7" y="347" width="1.8" height="1.8" fill="#000"/><path d="M666.5 349.5q-1.5 -1 -1.5 1.5v6q0 2 -1.5 1.5" stroke="#000" stroke-width="0.9" fill="none"/><rect x="664" y="358.5" width="1.8" height="1.8" fill="#000"/><rect x="668" y="352" width="1.8" height="2.2" fill="#000"/><path d="M568.8 367.5q-2 0 -2 2v3q0 1.5 -1.5 1.8q1.5 0.3 1.5 1.8v3q0 2 2 2" stroke="#000" stroke-width="1.1" fill="none"/><rect x="571" y="369" width="2" height="4" fill="#000"/><rect x="571" y="375" width="2" height="4" fill="#000"/><path d="M541.5 412a5.2 5.2 0 1 0 1.5 -7" stroke="#000" stroke-width="1.1" fill="none"/><path d="M540 409.5l1 4 3.5-1.5" stroke="#000" stroke-width="1" fill="none"/><path d="M569.5 403.5l-5 5.5h3.2v4h3.6v-4h3.2z" fill="#000"/><path d="M569.5 412v3.5M567.5 414l2 1.5 2-1.5" stroke="#000" stroke-width="1" fill="none"/><path d="M594 403.5v12M588 409.5h12" stroke="#000" stroke-width="1.1"/><path d="M591.8 405.5l2.2-2.2 2.2 2.2M591.8 413.5l2.2 2.2 2.2-2.2M590 407.3l-2.2 2.2 2.2 2.2M598 407.3l2.2 2.2-2.2 2.2" stroke="#000" stroke-width="1.1" fill="none"/><rect x="613" y="406.5" width="1" height="1" fill="#444"/><rect x="616.5" y="406.5" width="1" height="1" fill="#444"/><rect x="620" y="406.5" width="1" height="1" fill="#444"/><rect x="623" y="406.5" width="1" height="1" fill="#444"/><rect x="613" y="409.5" width="1" height="1" fill="#444"/><rect x="616.5" y="409.5" width="1" height="1" fill="#444"/><rect x="620" y="409.5" width="1" height="1" fill="#444"/><rect x="623" y="409.5" width="1" height="1" fill="#444"/><rect x="613" y="412.5" width="1" height="1" fill="#444"/><rect x="616.5" y="412.5" width="1" height="1" fill="#444"/><rect x="620" y="412.5" width="1" height="1" fill="#444"/><rect x="623" y="412.5" width="1" height="1" fill="#444"/><rect x="637" y="406" width="9.5" height="1.1" fill="#000"/><rect x="637" y="409.3" width="9.5" height="1.1" fill="#000"/><rect x="637" y="412.6" width="9.5" height="1.1" fill="#000"/><path d="M661.5 411a5 5 0 0 1 8 -6M670 408a5 5 0 0 1 -8 6" stroke="#000" stroke-width="1.1" fill="none"/><path d="M667.5 404h3v3M664 415.5h-3v-3" stroke="#000" stroke-width="1" fill="none"/></svg>
<svg class="a" style="left:0;top:0" width="681" height="1142">
<text x="10" y="824" font-family="Liberation Sans" font-size="11" fill="#000">Output</text>
<text x="59" y="825" font-family="Liberation Sans" font-size="10.8" fill="#000">Debugging data</text>
<path d="M510.5 817.5 L522.5 829.5 M522.5 817.5 L510.5 829.5" stroke="#e8230a" stroke-width="3.6" stroke-linecap="round"/>
<path d="M510.5 817.5 L516 823" stroke="#ff9a70" stroke-width="1.5" stroke-linecap="round"/>
<text x="15" y="852" font-family="Liberation Sans" font-size="10.6" fill="#000">Name</text><text x="125" y="852" font-family="Liberation Sans" font-size="11" fill="#000">Value</text>
<rect x="118" y="837" width="1" height="23" fill="#e5e5e5"/>
<rect x="118" y="860" width="1" height="270" fill="#f0f0f0"/>
<rect x="519" y="860" width="1" height="270" fill="#f0f0f0"/>
<rect x="9" y="876" width="516" height="1" fill="#ececec"/>
<rect x="9" y="893" width="516" height="1" fill="#ececec"/>
<rect x="9" y="910" width="516" height="1" fill="#ececec"/>
<rect x="9" y="927" width="516" height="1" fill="#ececec"/>
<rect x="9" y="944" width="516" height="1" fill="#ececec"/>
<rect x="9" y="961" width="516" height="1" fill="#ececec"/>
<rect x="9" y="978" width="516" height="1" fill="#ececec"/>
<rect x="9" y="995" width="516" height="1" fill="#ececec"/>
<rect x="9" y="1012" width="516" height="1" fill="#ececec"/>
<rect x="9" y="1029" width="516" height="1" fill="#ececec"/>
<rect x="9" y="1046" width="516" height="1" fill="#ececec"/>
<rect x="9" y="1063" width="516" height="1" fill="#ececec"/>
<rect x="9" y="1080" width="516" height="1" fill="#ececec"/>
<rect x="9" y="1097" width="516" height="1" fill="#ececec"/>
<rect x="9" y="1114" width="516" height="1" fill="#ececec"/>
</svg>
<!-- ================= SPYDER ================= -->
<div class="a" id="spyder" style="left:681px;top:0;width:1239px;height:1142px;background:#19232d;overflow:hidden">
  <div class="a" style="left:0;top:0;width:1239px;height:1px;background:#9a9a9a"></div>
  <div class="a" style="left:0;top:1px;width:1239px;height:30px;background:#fff"></div>
  <div class="a" style="left:0;top:1px;width:6px;height:30px;background:linear-gradient(90deg,#e6e6e6,#fff)"></div>
  <div class="a" style="left:0;top:31px;width:1239px;height:29px;background:#455364"></div>
  <div class="a" style="left:0;top:60px;width:1239px;height:1px;background:#19232d"></div><div class="a" style="left:0;top:31px;width:1239px;height:1px;background:#111a23"></div><div class="a" style="left:1238px;top:0;width:1px;height:1142px;background:#a0a0a0"></div>
  <div class="a" style="left:0;top:61px;width:1239px;height:38px;background:#455364"></div>
  <div class="a" style="left:0;top:123px;width:662px;height:1px;background:#455364"></div>
  <!-- splitter -->
  <div class="a" style="left:663px;top:99px;width:7px;height:1035px;background:#455364"></div>
  <div class="a" style="left:663px;top:613px;width:576px;height:7px;background:#455364"></div>
  <!-- editor tab -->
  <div class="a" style="left:38px;top:134px;width:95px;height:27px;background:#54687a;border-radius:4px 4px 0 0"></div>
  <div class="a" style="left:38px;top:158px;width:95px;height:3px;background:#259ae9"></div>
  <!-- editor frame -->
  <div class="a" style="left:2px;top:161px;width:660px;height:972px;border:1px solid #455364;border-radius:4px"></div>
  <div class="a" style="left:4px;top:163px;width:64px;height:951px;background:#222b35"></div>
  <div class="a" style="left:646px;top:164px;width:12px;height:950px;background:#222b35"></div>
  <div class="a" style="left:622px;top:163px;width:1px;height:951px;background:#5f6770"></div>
  <!-- current line -->
  <div class="a" style="left:72px;top:468px;width:574px;height:15px;background:#3a424a"></div>
  <!-- editor h scrollbar -->
  <div class="a" style="left:20px;top:1116px;width:620px;height:12px;background:#455364;border-radius:6px"></div>
  <div class="a" style="left:22px;top:1118px;width:616px;height:8px;background:#60798b;border-radius:4px"></div>
  <!-- status bar -->
  <div class="a" style="left:0;top:1134px;width:1239px;height:8px;background:#455364"></div>
  <!-- var explorer frame -->
  <div class="a" style="left:671px;top:135px;width:566px;height:455px;border:1px solid #455364;border-radius:4px"></div>
  <div class="a" style="left:674px;top:163px;width:12px;height:424px;background:#455364"></div>
  <div class="a" style="left:686px;top:138px;width:549px;height:25px;background:#455364"></div>
  <!-- console frame -->
  <div class="a" style="left:708px;top:630px;width:92px;height:27px;background:#54687a;border-radius:4px 4px 0 0"></div>
  <div class="a" style="left:708px;top:654px;width:92px;height:3px;background:#259ae9"></div>
  <div class="a" style="left:671px;top:657px;width:566px;height:454px;border:1px solid #455364;border-radius:4px"></div>
  <div class="a" style="left:678px;top:675px;width:537px;height:1px;background:#0e151c"></div>
  <!-- console scrollbar -->
  <div class="a" style="left:1221px;top:676px;width:12px;height:415px;border:1px solid #455364;border-radius:6px"></div>
  <div class="a" style="left:1223px;top:718px;width:8px;height:235px;background:#60798b;border-radius:4px"></div>
</div>

<svg class="a" style="left:681px;top:0" width="1239" height="1142">
<rect x="142" y="408" width="7" height="15" fill="#1a72bb"/>
<rect x="100" y="453" width="7" height="15" fill="#1a72bb"/>
<rect x="156" y="468" width="7" height="15" fill="#1a72bb"/>
<rect x="345" y="483" width="7" height="15" fill="#1a72bb"/>
<text x="38.5" y="180" text-anchor="end" font-family="Liberation Mono" font-size="12.3" letter-spacing="0" font-weight="normal" fill="#9aa0a6">1</text>
<text x="38.5" y="195" text-anchor="end" font-family="Liberation Mono" font-size="12.3" letter-spacing="0" font-weight="normal" fill="#9aa0a6">2</text>
<text x="38.5" y="210" text-anchor="end" font-family="Liberation Mono" font-size="12.3" letter-spacing="0" font-weight="normal" fill="#9aa0a6">3</text>
<text x="38.5" y="225" text-anchor="end" font-family="Liberation Mono" font-size="12.3" letter-spacing="0" font-weight="normal" fill="#9aa0a6">4</text>
<text x="38.5" y="240" text-anchor="end" font-family="Liberation Mono" font-size="12.3" letter-spacing="0" font-weight="normal" fill="#9aa0a6">5</text>
<text x="38.5" y="255" text-anchor="end" font-family="Liberation Mono" font-size="12.3" letter-spacing="0" font-weight="normal" fill="#9aa0a6">6</text>
<text x="38.5" y="270" text-anchor="end" font-family="Liberation Mono" font-size="12.3" letter-spacing="0" font-weight="normal" fill="#9aa0a6">7</text>
<text x="38.5" y="285" text-anchor="end" font-family="Liberation Mono" font-size="12.3" letter-spacing="0" font-weight="normal" fill="#9aa0a6">8</text>
<text x="38.5" y="300" text-anchor="end" font-family="Liberation Mono" font-size="12.3" letter-spacing="0" font-weight="normal" fill="#9aa0a6">9</text>
<text x="38.5" y="315" text-anchor="end" font-family="Liberation Mono" font-size="12.3" letter-spacing="0" font-weight="normal" fill="#9aa0a6">10</text>
<text x="38.5" y="330" text-anchor="end" font-family="Liberation Mono" font-size="12.3" letter-spacing="0" font-weight="normal" fill="#9aa0a6">11</text>
<text x="38.5" y="345" text-anchor="end" font-family="Liberation Mono" font-size="12.3" letter-spacing="0" font-weight="normal" fill="#9aa0a6">12</text>
<text x="38.5" y="360" text-anchor="end" font-family="Liberation Mono" font-size="12.3" letter-spacing="0" font-weight="normal" fill="#9aa0a6">13</text>
<text x="38.5" y="375" text-anchor="end" font-family="Liberation Mono" font-size="12.3" letter-spacing="0" font-weight="normal" fill="#9aa0a6">14</text>
<text x="38.5" y="390" text-anchor="end" font-family="Liberation Mono" font-size="12.3" letter-spacing="0" font-weight="normal" fill="#9aa0a6">15</text>
<text x="38.5" y="405" text-anchor="end" font-family="Liberation Mono" font-size="12.3" letter-spacing="0" font-weight="normal" fill="#9aa0a6">16</text>
<text x="38.5" y="420" text-anchor="end" font-family="Liberation Mono" font-size="12.3" letter-spacing="0" font-weight="normal" fill="#9aa0a6">17</text>
<text x="38.5" y="435" text-anchor="end" font-family="Liberation Mono" font-size="12.3" letter-spacing="0" font-weight="normal" fill="#9aa0a6">18</text>
<text x="38.5" y="450" text-anchor="end" font-family="Liberation Mono" font-size="12.3" letter-spacing="0" font-weight="normal" fill="#9aa0a6">19</text>
<text x="38.5" y="465" text-anchor="end" font-family="Liberation Mono" font-size="12.3" letter-spacing="0" font-weight="normal" fill="#9aa0a6">20</text>
<text x="38.5" y="480" text-anchor="end" font-family="Liberation Mono" font-size="12.3" letter-spacing="0" font-weight="bold" fill="#ffffff">21</text>
<text x="38.5" y="495" text-anchor="end" font-family="Liberation Mono" font-size="12.3" letter-spacing="0" font-weight="normal" fill="#9aa0a6">22</text>
<text x="38.5" y="510" text-anchor="end" font-family="Liberation Mono" font-size="12.3" letter-spacing="0" font-weight="normal" fill="#9aa0a6">23</text>
<text x="38.5" y="525" text-anchor="end" font-family="Liberation Mono" font-size="12.3" letter-spacing="0" font-weight="normal" fill="#9aa0a6">24</text>
<text x="38.5" y="540" text-anchor="end" font-family="Liberation Mono" font-size="12.3" letter-spacing="0" font-weight="normal" fill="#9aa0a6">25</text>
<text x="38.5" y="555" text-anchor="end" font-family="Liberation Mono" font-size="12.3" letter-spacing="0" font-weight="normal" fill="#9aa0a6">26</text>
<text x="72" y="180" font-family="Liberation Mono" font-size="12.3" textLength="161" lengthAdjust="spacing" fill="#999999" xml:space="preserve"># -*- coding: utf-8 -*-</text>
<text x="72" y="195" font-family="Liberation Mono" font-size="12.3" textLength="21" lengthAdjust="spacing" font-style="italic" fill="#b0e686" xml:space="preserve">&quot;&quot;&quot;</text>
<text x="72" y="210" font-family="Liberation Mono" font-size="12.3" textLength="245" lengthAdjust="spacing" font-style="italic" fill="#b0e686" xml:space="preserve">Created on Tue Jun 15 21:53:39 2021</text>
<text x="72" y="240" font-family="Liberation Mono" font-size="12.3" textLength="126" lengthAdjust="spacing" font-style="italic" fill="#b0e686" xml:space="preserve">@author: andrbig77</text>
<text x="72" y="255" font-family="Liberation Mono" font-size="12.3" textLength="21" lengthAdjust="spacing" font-style="italic" fill="#b0e686" xml:space="preserve">&quot;&quot;&quot;</text>
<text x="72" y="270" font-family="Liberation Mono" font-size="12.3" textLength="21" lengthAdjust="spacing" fill="#fab16c" xml:space="preserve">sum</text>
<text x="93" y="270" font-family="Liberation Mono" font-size="12.3" textLength="7" lengthAdjust="spacing" fill="#ffffff" xml:space="preserve">=</text>
<text x="100" y="270" font-family="Liberation Mono" font-size="12.3" textLength="7" lengthAdjust="spacing" fill="#faed5c" xml:space="preserve">0</text>
<text x="72" y="315" font-family="Liberation Mono" font-size="12.3" textLength="56" lengthAdjust="spacing" fill="#ffffff" xml:space="preserve">j_start=</text>
<text x="128" y="315" font-family="Liberation Mono" font-size="12.3" textLength="7" lengthAdjust="spacing" fill="#faed5c" xml:space="preserve">1</text>
<text x="72" y="330" font-family="Liberation Mono" font-size="12.3" textLength="49" lengthAdjust="spacing" fill="#ffffff" xml:space="preserve">j_step=</text>
<text x="121" y="330" font-family="Liberation Mono" font-size="12.3" textLength="7" lengthAdjust="spacing" fill="#faed5c" xml:space="preserve">2</text>
<text x="72" y="345" font-family="Liberation Mono" font-size="12.3" textLength="49" lengthAdjust="spacing" fill="#ffffff" xml:space="preserve">j_stop=</text>
<text x="121" y="345" font-family="Liberation Mono" font-size="12.3" textLength="14" lengthAdjust="spacing" fill="#faed5c" xml:space="preserve">10</text>
<text x="72" y="375" font-family="Liberation Mono" font-size="12.3" textLength="35" lengthAdjust="spacing" fill="#fab16c" xml:space="preserve">print</text>
<text x="107" y="375" font-family="Liberation Mono" font-size="12.3" textLength="7" lengthAdjust="spacing" fill="#ffffff" xml:space="preserve">(</text>
<text x="114" y="375" font-family="Liberation Mono" font-size="12.3" textLength="14" lengthAdjust="spacing" font-style="italic" fill="#b0e686" xml:space="preserve">&#x27;&#x27;</text>
<text x="128" y="375" font-family="Liberation Mono" font-size="12.3" textLength="7" lengthAdjust="spacing" fill="#ffffff" xml:space="preserve">)</text>
<text x="72" y="405" font-family="Liberation Mono" font-size="12.3" textLength="35" lengthAdjust="spacing" fill="#fab16c" xml:space="preserve">print</text>
<text x="107" y="405" font-family="Liberation Mono" font-size="12.3" textLength="7" lengthAdjust="spacing" fill="#ffffff" xml:space="preserve">(</text>
<text x="114" y="405" font-family="Liberation Mono" font-size="12.3" textLength="126" lengthAdjust="spacing" font-style="italic" fill="#b0e686" xml:space="preserve">&#x27;----------------&#x27;</text>
<text x="240" y="405" font-family="Liberation Mono" font-size="12.3" textLength="7" lengthAdjust="spacing" fill="#ffffff" xml:space="preserve">)</text>
<text x="72" y="420" font-family="Liberation Mono" font-size="12.3" textLength="35" lengthAdjust="spacing" fill="#fab16c" xml:space="preserve">print</text>
<text x="107" y="420" font-family="Liberation Mono" font-size="12.3" textLength="7" lengthAdjust="spacing" fill="#ffffff" xml:space="preserve">(</text>
<text x="114" y="420" font-family="Liberation Mono" font-size="12.3" textLength="133" lengthAdjust="spacing" font-style="italic" fill="#b0e686" xml:space="preserve">&#x27;   x   |  sum   |&#x27;</text>
<text x="247" y="420" font-family="Liberation Mono" font-size="12.3" textLength="7" lengthAdjust="spacing" fill="#ffffff" xml:space="preserve">)</text>
<text x="72" y="435" font-family="Liberation Mono" font-size="12.3" textLength="35" lengthAdjust="spacing" fill="#fab16c" xml:space="preserve">print</text>
<text x="107" y="435" font-family="Liberation Mono" font-size="12.3" textLength="7" lengthAdjust="spacing" fill="#ffffff" xml:space="preserve">(</text>
<text x="114" y="435" font-family="Liberation Mono" font-size="12.3" textLength="126" lengthAdjust="spacing" font-style="italic" fill="#b0e686" xml:space="preserve">&#x27;----------------&#x27;</text>
<text x="240" y="435" font-family="Liberation Mono" font-size="12.3" textLength="7" lengthAdjust="spacing" fill="#ffffff" xml:space="preserve">)</text>
<text x="72" y="465" font-family="Liberation Mono" font-size="12.3" textLength="21" lengthAdjust="spacing" fill="#c670e0" xml:space="preserve">for</text>
<text x="93" y="465" font-family="Liberation Mono" font-size="12.3" textLength="21" lengthAdjust="spacing" fill="#ffffff" xml:space="preserve"> x </text>
<text x="114" y="465" font-family="Liberation Mono" font-size="12.3" textLength="14" lengthAdjust="spacing" fill="#c670e0" xml:space="preserve">in</text>
<text x="128" y="465" font-family="Liberation Mono" font-size="12.3" textLength="7" lengthAdjust="spacing" fill="#ffffff" xml:space="preserve"> </text>
<text x="135" y="465" font-family="Liberation Mono" font-size="12.3" textLength="35" lengthAdjust="spacing" fill="#fab16c" xml:space="preserve">range</text>
<text x="170" y="465" font-family="Liberation Mono" font-size="12.3" textLength="182" lengthAdjust="spacing" fill="#ffffff" xml:space="preserve">(j_start, j_stop, j_step):</text>
<text x="72" y="480" font-family="Liberation Mono" font-size="12.3" textLength="28" lengthAdjust="spacing" fill="#ffffff" xml:space="preserve">    </text>
<text x="100" y="480" font-family="Liberation Mono" font-size="12.3" textLength="21" lengthAdjust="spacing" fill="#fab16c" xml:space="preserve">sum</text>
<text x="121" y="480" font-family="Liberation Mono" font-size="12.3" textLength="7" lengthAdjust="spacing" fill="#ffffff" xml:space="preserve">=</text>
<text x="128" y="480" font-family="Liberation Mono" font-size="12.3" textLength="21" lengthAdjust="spacing" fill="#fab16c" xml:space="preserve">sum</text>
<text x="149" y="480" font-family="Liberation Mono" font-size="12.3" textLength="14" lengthAdjust="spacing" fill="#ffffff" xml:space="preserve">+x</text>
<text x="72" y="495" font-family="Liberation Mono" font-size="12.3" textLength="28" lengthAdjust="spacing" fill="#ffffff" xml:space="preserve">    </text>
<text x="100" y="495" font-family="Liberation Mono" font-size="12.3" textLength="35" lengthAdjust="spacing" fill="#fab16c" xml:space="preserve">print</text>
<text x="135" y="495" font-family="Liberation Mono" font-size="12.3" textLength="7" lengthAdjust="spacing" fill="#ffffff" xml:space="preserve">(</text>
<text x="142" y="495" font-family="Liberation Mono" font-size="12.3" textLength="140" lengthAdjust="spacing" font-style="italic" fill="#b0e686" xml:space="preserve">&#x27; {0:4d}  | {1:4d} &#x27;</text>
<text x="282" y="495" font-family="Liberation Mono" font-size="12.3" textLength="84" lengthAdjust="spacing" fill="#ffffff" xml:space="preserve">.format( x, </text>
<text x="366" y="495" font-family="Liberation Mono" font-size="12.3" textLength="21" lengthAdjust="spacing" fill="#fab16c" xml:space="preserve">sum</text>
<text x="387" y="495" font-family="Liberation Mono" font-size="12.3" textLength="21" lengthAdjust="spacing" fill="#ffffff" xml:space="preserve"> ))</text>
<text x="72" y="525" font-family="Liberation Mono" font-size="12.3" textLength="35" lengthAdjust="spacing" fill="#fab16c" xml:space="preserve">print</text>
<text x="107" y="525" font-family="Liberation Mono" font-size="12.3" textLength="7" lengthAdjust="spacing" fill="#ffffff" xml:space="preserve">(</text>
<text x="114" y="525" font-family="Liberation Mono" font-size="12.3" textLength="14" lengthAdjust="spacing" font-style="italic" fill="#b0e686" xml:space="preserve">&#x27;&#x27;</text>
<text x="128" y="525" font-family="Liberation Mono" font-size="12.3" textLength="7" lengthAdjust="spacing" fill="#ffffff" xml:space="preserve">)</text>
<text x="72" y="540" font-family="Liberation Mono" font-size="12.3" textLength="35" lengthAdjust="spacing" fill="#fab16c" xml:space="preserve">print</text>
<text x="107" y="540" font-family="Liberation Mono" font-size="12.3" textLength="7" lengthAdjust="spacing" fill="#ffffff" xml:space="preserve">(</text>
<text x="114" y="540" font-family="Liberation Mono" font-size="12.3" textLength="532" lengthAdjust="spacing" font-style="italic" fill="#b0e686" xml:space="preserve">&#x27;The sum of numbers from {0:1d} to {1:3d} with increment {2:3d} is: {3:3d} &#x27;</text>
<text x="72" y="555" font-family="Liberation Mono" font-size="12.3" textLength="273" lengthAdjust="spacing" fill="#ffffff" xml:space="preserve">      .format(j_start, j_stop, j_step, </text>
<text x="345" y="555" font-family="Liberation Mono" font-size="12.3" textLength="21" lengthAdjust="spacing" fill="#fab16c" xml:space="preserve">sum</text>
<text x="366" y="555" font-family="Liberation Mono" font-size="12.3" textLength="21" lengthAdjust="spacing" fill="#ffffff" xml:space="preserve">) )</text>
<rect x="648" y="413" width="9" height="3" fill="#1a72bb"/>
<rect x="648" y="459" width="9" height="3" fill="#1a72bb"/>
<rect x="648" y="474" width="9" height="3" fill="#1a72bb"/>
<rect x="648" y="489" width="9" height="3" fill="#1a72bb"/>
<text x="94.5" y="605.5" font-family="Liberation Sans" font-weight="bold" font-size="27" letter-spacing="0.4" fill="#ffffff">How can I evaluate the statement</text>
<text x="94.5" y="637.5" font-family="Liberation Sans" font-weight="bold" font-size="27" letter-spacing="0.4" fill="#ffffff">of variables in the loop in SMATH?</text>
<text x="94.5" y="669.5" font-family="Liberation Sans" font-weight="bold" font-size="27" letter-spacing="0.4" fill="#ffffff">I want to see how the variables are</text>
<text x="94.5" y="701.5" font-family="Liberation Sans" font-weight="bold" font-size="27" letter-spacing="0.4" fill="#ffffff">changing in the progress of</text>
<text x="94.5" y="733.5" font-family="Liberation Sans" font-weight="bold" font-size="27" letter-spacing="0.4" fill="#ffffff">looping. like in python -&gt;</text>
</svg>
<svg class="a" style="left:681px;top:0" width="1239" height="1142">
<text x="29" y="19.8" font-family="Liberation Sans" font-size="11.8" text-anchor="start" letter-spacing="0" fill="#9a9a9a" xml:space="preserve">Spyder (Python 3.9)</text>
<circle cx="16" cy="14.3" r="5.8" fill="#333"/><path d="M13 9.5l2 4M19 9.5l-1.5 4.5M12.5 19l2-4M18.5 19.5l-1-4" stroke="#ddd" stroke-width="0.9"/><path d="M10.3 16q2.5-4.5 5.5-2t6-2.5" stroke="#ee0000" stroke-width="2.3" fill="none"/>
<rect x="1119" y="15" width="10" height="1" fill="#9a9a9a"/>
<rect x="1164.5" y="10.5" width="9" height="9" fill="none" stroke="#9a9a9a"/>
<path d="M1210 10 l10 10 m0 -10 l-10 10" stroke="#9a9a9a" stroke-width="1.1"/>
<text x="7" y="50" font-family="Liberation Sans" font-size="12" text-anchor="start" letter-spacing="0" fill="#e0e1e3" xml:space="preserve">File</text>
<text x="33" y="50" font-family="Liberation Sans" font-size="12" text-anchor="start" letter-spacing="0" fill="#e0e1e3" xml:space="preserve">Edit</text>
<text x="61" y="50" font-family="Liberation Sans" font-size="12" text-anchor="start" letter-spacing="0" fill="#e0e1e3" xml:space="preserve">Search</text>
<text x="104" y="50" font-family="Liberation Sans" font-size="12" text-anchor="start" letter-spacing="0" fill="#e0e1e3" xml:space="preserve">Source</text>
<text x="148" y="50" font-family="Liberation Sans" font-size="12" text-anchor="start" letter-spacing="0" fill="#e0e1e3" xml:space="preserve">Run</text>
<text x="177" y="50" font-family="Liberation Sans" font-size="12" text-anchor="start" letter-spacing="0" fill="#e0e1e3" xml:space="preserve">Debug</text>
<text x="220" y="50" font-family="Liberation Sans" font-size="12" text-anchor="start" letter-spacing="0" fill="#e0e1e3" xml:space="preserve">Consoles</text>
<text x="276" y="50" font-family="Liberation Sans" font-size="12" text-anchor="start" letter-spacing="0" fill="#e0e1e3" xml:space="preserve">Projects</text>
<text x="326" y="50" font-family="Liberation Sans" font-size="12" text-anchor="start" letter-spacing="0" fill="#e0e1e3" xml:space="preserve">Tools</text>
<text x="361" y="50" font-family="Liberation Sans" font-size="12" text-anchor="start" letter-spacing="0" fill="#e0e1e3" xml:space="preserve">View</text>
<text x="394" y="50" font-family="Liberation Sans" font-size="12" text-anchor="start" letter-spacing="0" fill="#e0e1e3" xml:space="preserve">Help</text>
</svg>
<svg class="a" style="left:681px;top:0" width="1239" height="1142">
<g transform="translate(-681,0)">
<path d="M696 71h8l5 5v12.5a1.5 1.5 0 0 1-1.5 1.5h-10a1.5 1.5 0 0 1-1.5-1.5z" fill="#fff"/><path d="M704 71v5h5z" fill="#455364"/>
<path d="M738 74h6l2 2h8v3h-14z" fill="#fff"/><path d="M738 88l3-9h16l-3 9z" fill="#fff"/>
<path d="M783 72h12l4 4v12h-16z" fill="#9a9a9a"/><rect x="785" y="74" width="9" height="3.5" fill="#455364"/><circle cx="791" cy="83" r="2.2" fill="#455364"/>
<path d="M828 70h12l4 4v12h-16z" fill="#9a9a9a"/><rect x="830" y="72" width="9" height="3.5" fill="#455364"/><circle cx="836" cy="81" r="2.2" fill="#455364"/><path d="M826 74v15h14" stroke="#9a9a9a" stroke-width="1.3" fill="none"/>
<path d="M875 74l11 6-11 6z" fill="#21a369"/>
<rect x="912" y="70" width="18" height="20" fill="#eeeeee"/>
<rect x="956" y="70" width="18" height="20" fill="#eeeeee"/>
<rect x="1000" y="70" width="18" height="20" fill="#eeeeee"/>
<rect x="914" y="75" width="10" height="7" fill="#aecbf0" stroke="#f07a30" stroke-width="1.2"/><path d="M925 73l7 7-7 7z" fill="#22b022"/>
<rect x="958" y="75" width="10" height="7" fill="#aecbf0" stroke="#f07a30" stroke-width="1.2"/><path d="M969 73l7 7-7 7z" fill="#22b022"/><path d="M957 82v6h4" stroke="#e02020" stroke-width="1.3" fill="none"/>
<rect x="1002" y="75" width="10" height="7" fill="#aecbf0"/><path d="M1013 73l7 7-7 7z" fill="#22b022"/>
<rect x="1046" y="73" width="2.5" height="14" fill="#259ae9"/><rect x="1050" y="73" width="2.5" height="14" fill="#259ae9"/><path d="M1054 73l9 7-9 7z" fill="#259ae9"/>
<path d="M1091 83a8 8 0 0 1 15 -4" stroke="#259ae9" stroke-width="2" fill="none"/><path d="M1108 75l0 7-6 -2z" fill="#259ae9"/><circle cx="1099" cy="83.5" r="1.7" fill="#259ae9"/>
<path d="M1143 71v13M1138 80l5 5 5-5" stroke="#259ae9" stroke-width="1.7" fill="none"/><circle cx="1143" cy="88" r="1.7" fill="#259ae9"/>
<path d="M1187 74v10M1182 77l5-5 5 5" stroke="#259ae9" stroke-width="1.7" fill="none"/><circle cx="1187" cy="88" r="1.7" fill="#259ae9"/>
<path d="M1222 73l8 7-8 7zM1230 73l8 7-8 7z" fill="#259ae9"/>
<rect x="1269" y="75" width="11" height="11" fill="#259ae9"/>
<rect x="1311" y="72" width="16" height="16" rx="1.5" fill="none" stroke="#fff" stroke-width="2"/><rect x="1312" y="73" width="7" height="14" fill="#fff"/><path d="M1312 73h4v2h-2v2.5h-2zM1312 87h4v-2h-2v-2.5h-2z" fill="#455364"/><rect x="1317" y="73" width="1.2" height="14" fill="#fff"/>
<path d="M1355 88.5l9.5-9.5" stroke="#fff" stroke-width="3.4" stroke-linecap="square"/><circle cx="1367.5" cy="76" r="5.6" fill="#fff"/><path d="M1368 75.5l6-6" stroke="#455364" stroke-width="3.6"/>
<path d="M1405 71.5h4.5a2.5 2.5 0 0 1 2.5 2.5v5a2 2 0 0 1-2 2h-5.5a2.5 2.5 0 0 0-2.5 2.5v2h-1.5a2.5 2.5 0 0 1-2.5-2.5v-4.5a2.5 2.5 0 0 1 2.5-2.5h6v-1h-4.5v-1.5a2 2 0 0 1 2-2z" fill="#3b77b0"/><path d="M1409 89.5h-4.5a2.5 2.5 0 0 1-2.5-2.5v-5a2 2 0 0 1 2-2h5.5a2.5 2.5 0 0 0 2.5-2.5v-2h1.5a2.5 2.5 0 0 1 2.5 2.5v4.5a2.5 2.5 0 0 1-2.5 2.5h-6v1h4.5v1.5a2 2 0 0 1-2 2z" fill="#f7d33e"/>
<rect x="1430" y="70" width="399" height="20" rx="3" fill="#19232d"/><rect x="1816" y="70" width="1" height="20" fill="#455364"/><path d="M1820 78h8l-4 4z" fill="#60798b"/>
<text x="1439.0" y="84.5" font-family="Liberation Sans" font-size="10.6" text-anchor="start" letter-spacing="-0.35" fill="#e0e1e3" xml:space="preserve">E:\PROJECTS.PYTHON</text>
<path d="M1843 77h6l2 2h8v2h-16z" fill="#fff"/><path d="M1843 88l3-7h15l-3 7z" fill="#fff"/>
<path d="M1896 71l-7 8h4.5v8h5v-8h4.5z" fill="#fff"/>
<text x="689.0" y="116" font-family="Liberation Sans" font-size="11" text-anchor="start" letter-spacing="-0.25" fill="#e0e1e3" xml:space="preserve">E:\PROJECTS.PYTHON\test_loop.py</text>
<rect x="694" y="137.5" width="12" height="9" rx="1" fill="none" stroke="#fff" stroke-width="1.5"/><rect x="700" y="137" width="6" height="2.5" fill="#fff"/>
<text x="729.0" y="152" font-family="Liberation Sans" font-size="11.5" text-anchor="start" letter-spacing="-0.2" fill="#e0e1e3" xml:space="preserve">test_loop.py</text>
<path d="M798.5 143.5l6 6m0-6l-6 6" stroke="#e0e1e3" stroke-width="1.2"/>
<path d="M1319 137h12M1319 141h12M1319 145h12" stroke="#fff" stroke-width="1.6"/>
<path d="M1370 110v6M1366.5 113l3.5 3.5 3.5-3.5" stroke="#fff" stroke-width="2" fill="none"/><rect x="1365" y="119" width="10" height="1.6" fill="#fff"/>
<path d="M1405 111h8l2.5 2.5v8.5h-10.5z" fill="#9a9a9a"/><rect x="1407" y="112.5" width="5" height="2.5" fill="#19232d"/><circle cx="1410" cy="118" r="1.5" fill="#19232d"/>
<path d="M1444 111h8l2.5 2.5v8.5h-10.5z" fill="#fff"/><rect x="1446" y="112.5" width="5" height="2.5" fill="#19232d"/><path d="M1450 121l5-5" stroke="#19232d" stroke-width="2.5"/><path d="M1450.5 121.5l4.5-4.5" stroke="#fff" stroke-width="1.3"/>
<rect x="1485" y="110.5" width="9" height="2" fill="#fff"/><path d="M1486 113h7l-0.8 10h-5.4z" fill="#fff"/>
<circle cx="1528" cy="115" r="3.3" fill="none" stroke="#fff" stroke-width="1.7"/><path d="M1530.5 117.5l3 3" stroke="#fff" stroke-width="2"/>
<path d="M1573.5 115a4.5 4.5 0 1 1 -1.5 -3.4" stroke="#fff" stroke-width="1.8" fill="none"/><path d="M1574 109.5v4.5h-4.5z" fill="#fff"/>
<path d="M1894 113h12M1894 117h12M1894 121h12" stroke="#fff" stroke-width="1.6"/>
<rect x="1429" y="138" width="1" height="25" fill="#19232d"/><rect x="1473" y="138" width="1" height="25" fill="#19232d"/><rect x="1513" y="138" width="1" height="25" fill="#19232d"/>
<rect x="1353" y="138" width="14" height="25" fill="#19232d"/>
<text x="1381.0" y="156" font-family="Liberation Sans" font-size="12.9" text-anchor="start" letter-spacing="0" fill="#e0e1e3" xml:space="preserve">Name</text><rect x="1413" y="140" width="15" height="22" fill="#455364"/>

<path d="M1416 153l5-5 5 5z" fill="#e0e1e3"/>
<text x="1438.0" y="156" font-family="Liberation Sans" font-size="12.9" text-anchor="start" letter-spacing="0" fill="#e0e1e3" xml:space="preserve">Type</text>
<text x="1482.0" y="156" font-family="Liberation Sans" font-size="12.9" text-anchor="start" letter-spacing="0" fill="#e0e1e3" xml:space="preserve">Size</text>
<text x="1714.5" y="156" font-family="Liberation Sans" font-size="12.9" text-anchor="middle" letter-spacing="0" fill="#e0e1e3" xml:space="preserve">Value</text>
<rect x="1367" y="163" width="61" height="29" fill="#202833"/>
<rect x="1429" y="163" width="43" height="29" fill="#383f48"/>
<rect x="1473" y="163" width="39" height="29" fill="#383f48"/>
<rect x="1513" y="163" width="402" height="29" fill="#8b5518"/>
<rect x="1355" y="192" width="560" height="1" fill="#455364"/>
<text x="1370.0" y="181" font-family="Liberation Mono" font-size="12.3" textLength="49" lengthAdjust="spacing" fill="#e0e1e3" xml:space="preserve">j_start</text>
<text x="1432.0" y="181" font-family="Liberation Mono" font-size="12.3" textLength="21" lengthAdjust="spacing" fill="#e0e1e3" xml:space="preserve">int</text>
<text x="1476.0" y="181" font-family="Liberation Mono" font-size="12.3" textLength="7" lengthAdjust="spacing" fill="#e0e1e3" xml:space="preserve">1</text>
<text x="1516.0" y="181" font-family="Liberation Mono" font-size="12.3" textLength="7" lengthAdjust="spacing" fill="#e0e1e3" xml:space="preserve">1</text>
<rect x="1367" y="193" width="61" height="29" fill="#202833"/>
<rect x="1429" y="193" width="43" height="29" fill="#383f48"/>
<rect x="1473" y="193" width="39" height="29" fill="#383f48"/>
<rect x="1513" y="193" width="402" height="29" fill="#8b5518"/>
<rect x="1355" y="222" width="560" height="1" fill="#455364"/>
<text x="1370.0" y="211" font-family="Liberation Mono" font-size="12.3" textLength="42" lengthAdjust="spacing" fill="#e0e1e3" xml:space="preserve">j_step</text>
<text x="1432.0" y="211" font-family="Liberation Mono" font-size="12.3" textLength="21" lengthAdjust="spacing" fill="#e0e1e3" xml:space="preserve">int</text>
<text x="1476.0" y="211" font-family="Liberation Mono" font-size="12.3" textLength="7" lengthAdjust="spacing" fill="#e0e1e3" xml:space="preserve">1</text>
<text x="1516.0" y="211" font-family="Liberation Mono" font-size="12.3" textLength="7" lengthAdjust="spacing" fill="#e0e1e3" xml:space="preserve">2</text>
<rect x="1367" y="223" width="61" height="29" fill="#202833"/>
<rect x="1429" y="223" width="43" height="29" fill="#383f48"/>
<rect x="1473" y="223" width="39" height="29" fill="#383f48"/>
<rect x="1513" y="223" width="402" height="29" fill="#8b5518"/>
<rect x="1355" y="252" width="560" height="1" fill="#455364"/>
<text x="1370.0" y="241" font-family="Liberation Mono" font-size="12.3" textLength="42" lengthAdjust="spacing" fill="#e0e1e3" xml:space="preserve">j_stop</text>
<text x="1432.0" y="241" font-family="Liberation Mono" font-size="12.3" textLength="21" lengthAdjust="spacing" fill="#e0e1e3" xml:space="preserve">int</text>
<text x="1476.0" y="241" font-family="Liberation Mono" font-size="12.3" textLength="7" lengthAdjust="spacing" fill="#e0e1e3" xml:space="preserve">1</text>
<text x="1516.0" y="241" font-family="Liberation Mono" font-size="12.3" textLength="14" lengthAdjust="spacing" fill="#e0e1e3" xml:space="preserve">10</text>
<rect x="1367" y="253" width="61" height="29" fill="#202833"/>
<rect x="1429" y="253" width="43" height="29" fill="#383f48"/>
<rect x="1473" y="253" width="39" height="29" fill="#383f48"/>
<rect x="1513" y="253" width="402" height="29" fill="#8b5518"/>
<rect x="1355" y="282" width="560" height="1" fill="#455364"/>
<text x="1370.0" y="271" font-family="Liberation Mono" font-size="12.3" textLength="21" lengthAdjust="spacing" fill="#e0e1e3" xml:space="preserve">sum</text>
<text x="1432.0" y="271" font-family="Liberation Mono" font-size="12.3" textLength="21" lengthAdjust="spacing" fill="#e0e1e3" xml:space="preserve">int</text>
<text x="1476.0" y="271" font-family="Liberation Mono" font-size="12.3" textLength="7" lengthAdjust="spacing" fill="#e0e1e3" xml:space="preserve">1</text>
<text x="1516.0" y="271" font-family="Liberation Mono" font-size="12.3" textLength="14" lengthAdjust="spacing" fill="#e0e1e3" xml:space="preserve">25</text>
<rect x="1367" y="283" width="61" height="29" fill="#202833"/>
<rect x="1429" y="283" width="43" height="29" fill="#383f48"/>
<rect x="1473" y="283" width="39" height="29" fill="#383f48"/>
<rect x="1513" y="283" width="402" height="29" fill="#8b5518"/>
<rect x="1355" y="312" width="560" height="1" fill="#455364"/>
<text x="1370.0" y="301" font-family="Liberation Mono" font-size="12.3" textLength="7" lengthAdjust="spacing" fill="#e0e1e3" xml:space="preserve">x</text>
<text x="1432.0" y="301" font-family="Liberation Mono" font-size="12.3" textLength="21" lengthAdjust="spacing" fill="#e0e1e3" xml:space="preserve">int</text>
<text x="1476.0" y="301" font-family="Liberation Mono" font-size="12.3" textLength="7" lengthAdjust="spacing" fill="#e0e1e3" xml:space="preserve">1</text>
<text x="1516.0" y="301" font-family="Liberation Mono" font-size="12.3" textLength="7" lengthAdjust="spacing" fill="#e0e1e3" xml:space="preserve">9</text>
<rect x="1428" y="163" width="1" height="150" fill="#455364"/><rect x="1472" y="163" width="1" height="150" fill="#455364"/><rect x="1512" y="163" width="1" height="150" fill="#455364"/>
<rect x="1544" y="592" width="29" height="20" rx="2" fill="#455364"/>
<text x="1558.5" y="606.5" font-family="Liberation Sans" font-size="11.5" text-anchor="middle" letter-spacing="-0.3" fill="#e0e1e3" xml:space="preserve">Help</text>
<rect x="1575" y="592" width="89" height="20" rx="2" fill="#54687a"/>
<rect x="1575" y="591" width="89" height="3" fill="#259ae9"/>
<text x="1619.5" y="606.5" font-family="Liberation Sans" font-size="11.5" text-anchor="middle" letter-spacing="-0.3" fill="#e0e1e3" xml:space="preserve">Variable Explorer</text>
<rect x="1666" y="592" width="31" height="20" rx="2" fill="#455364"/>
<text x="1681.5" y="606.5" font-family="Liberation Sans" font-size="11.5" text-anchor="middle" letter-spacing="-0.3" fill="#e0e1e3" xml:space="preserve">Plots</text>
<rect x="1699" y="592" width="29" height="20" rx="2" fill="#455364"/>
<text x="1713.5" y="606.5" font-family="Liberation Sans" font-size="11.5" text-anchor="middle" letter-spacing="-0.3" fill="#e0e1e3" xml:space="preserve">Files</text>
<rect x="1364" y="633.5" width="12" height="9" rx="1" fill="none" stroke="#fff" stroke-width="1.5"/><rect x="1370" y="633" width="6" height="2.5" fill="#fff"/>
<text x="1398.0" y="647.5" font-family="Liberation Sans" font-size="11.5" text-anchor="start" letter-spacing="-0.2" fill="#e0e1e3" xml:space="preserve">Console 1/A</text>
<path d="M1464.5 640.5l6 6m0-6l-6 6" stroke="#e0e1e3" stroke-width="1.2"/>
<rect x="1826" y="633" width="8" height="8" fill="#9a9a9a"/>
<rect x="1859" y="631" width="10" height="2" fill="#fff"/><path d="M1860 634h8l-0.8 10h-6.4z" fill="#fff"/>
<path d="M1894 633h12M1894 637h12M1894 641h12" stroke="#fff" stroke-width="1.6"/>
<text x="1359.0" y="702" font-family="Liberation Mono" font-size="12.3" textLength="28" lengthAdjust="spacing" fill="#00ff00" xml:space="preserve">In [</text>
<text x="1387.0" y="702" font-family="Liberation Mono" font-size="12.3" textLength="14" lengthAdjust="spacing" font-weight="bold" fill="#00ff00" xml:space="preserve">14</text>
<text x="1401.0" y="702" font-family="Liberation Mono" font-size="12.3" textLength="21" lengthAdjust="spacing" fill="#00ff00" xml:space="preserve">]: </text>
<text x="1422.0" y="702" font-family="Liberation Mono" font-size="12.3" textLength="56" lengthAdjust="spacing" fill="#ffffff" xml:space="preserve">runfile(</text>
<text x="1478.0" y="702" font-family="Liberation Mono" font-size="12.3" textLength="231" lengthAdjust="spacing" font-style="italic" fill="#b0e686" xml:space="preserve">&#x27;E:/PROJECTS.PYTHON/test_loop.py&#x27;</text>
<text x="1709.0" y="702" font-family="Liberation Mono" font-size="12.3" textLength="49" lengthAdjust="spacing" fill="#ffffff" xml:space="preserve">, wdir=</text>
<text x="1758.0" y="702" font-family="Liberation Mono" font-size="12.3" textLength="28" lengthAdjust="spacing" font-style="italic" fill="#b0e686" xml:space="preserve">&#x27;E:/</text>
<text x="1359.0" y="717" font-family="Liberation Mono" font-size="12.3" textLength="112" lengthAdjust="spacing" font-style="italic" fill="#b0e686" xml:space="preserve">PROJECTS.PYTHON&#x27;</text>
<text x="1471.0" y="717" font-family="Liberation Mono" font-size="12.3" textLength="7" lengthAdjust="spacing" fill="#ffffff" xml:space="preserve">)</text>
<text x="1359.0" y="747" font-family="Liberation Mono" font-size="12.3" textLength="112" lengthAdjust="spacing" fill="#ffffff" xml:space="preserve">----------------</text>
<text x="1359.0" y="762" font-family="Liberation Mono" font-size="12.3" textLength="119" lengthAdjust="spacing" fill="#ffffff" xml:space="preserve">   x   |  sum   |</text>
<text x="1359.0" y="777" font-family="Liberation Mono" font-size="12.3" textLength="112" lengthAdjust="spacing" fill="#ffffff" xml:space="preserve">----------------</text>
<text x="1359.0" y="792" font-family="Liberation Mono" font-size="12.3" textLength="98" lengthAdjust="spacing" fill="#ffffff" xml:space="preserve">    1  |    1 </text>
<text x="1359.0" y="807" font-family="Liberation Mono" font-size="12.3" textLength="98" lengthAdjust="spacing" fill="#ffffff" xml:space="preserve">    3  |    4 </text>
<text x="1359.0" y="822" font-family="Liberation Mono" font-size="12.3" textLength="98" lengthAdjust="spacing" fill="#ffffff" xml:space="preserve">    5  |    9 </text>
<text x="1359.0" y="837" font-family="Liberation Mono" font-size="12.3" textLength="98" lengthAdjust="spacing" fill="#ffffff" xml:space="preserve">    7  |   16 </text>
<text x="1359.0" y="852" font-family="Liberation Mono" font-size="12.3" textLength="98" lengthAdjust="spacing" fill="#ffffff" xml:space="preserve">    9  |   25 </text>
<text x="1359.0" y="882" font-family="Liberation Mono" font-size="12.3" textLength="413" lengthAdjust="spacing" fill="#ffffff" xml:space="preserve">The sum of numbers from 1 to  10 with increment   2 is:  25</text>
<text x="1359.0" y="912" font-family="Liberation Mono" font-size="12.3" textLength="28" lengthAdjust="spacing" fill="#00ff00" xml:space="preserve">In [</text>
<text x="1387.0" y="912" font-family="Liberation Mono" font-size="12.3" textLength="14" lengthAdjust="spacing" font-weight="bold" fill="#00ff00" xml:space="preserve">15</text>
<text x="1401.0" y="912" font-family="Liberation Mono" font-size="12.3" textLength="14" lengthAdjust="spacing" fill="#00ff00" xml:space="preserve">]:</text>
<path d="M1899 672l6-5 6 5z" fill="#455364"/><path d="M1899 1095l6 5 6-5z" fill="#455364"/>
<rect x="1572" y="1113" width="84" height="20" rx="2" fill="#54687a"/>
<rect x="1572" y="1112" width="84" height="3" fill="#259ae9"/>
<text x="1614.0" y="1128" font-family="Liberation Sans" font-size="11.5" text-anchor="middle" letter-spacing="-0.3" fill="#e0e1e3" xml:space="preserve">IPython console</text>
<rect x="1659" y="1113" width="41" height="20" rx="2" fill="#455364"/>
<text x="1679.5" y="1128" font-family="Liberation Sans" font-size="11.5" text-anchor="middle" letter-spacing="-0.3" fill="#e0e1e3" xml:space="preserve">History</text>
<path d="M698 1116v12l-6-6z" fill="#455364"/><path d="M1329 1116v12l6-6z" fill="#455364"/>
</g></svg>
</body></html>
